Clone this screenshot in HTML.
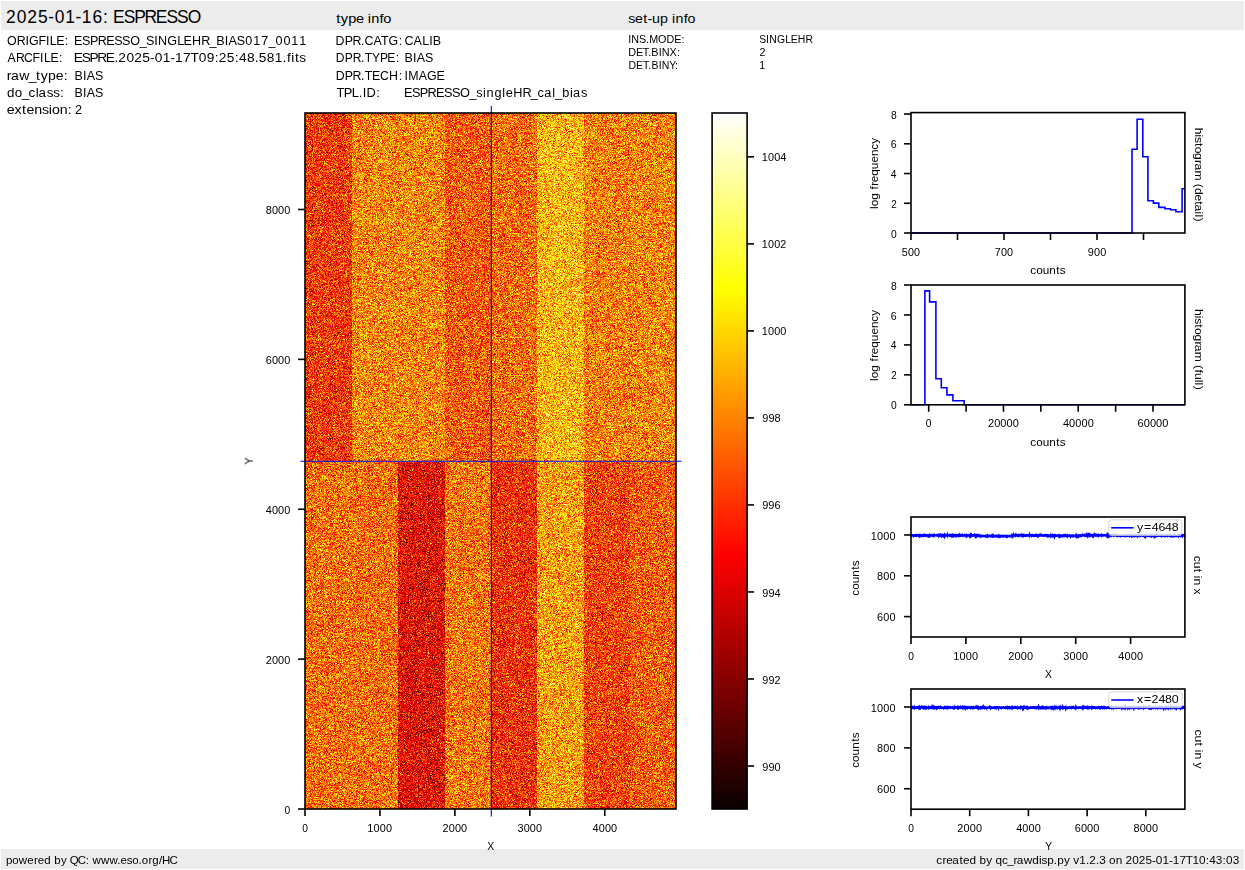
<!DOCTYPE html>
<html><head><meta charset="utf-8"><title>ESPRESSO raw display</title>
<style>
html,body{margin:0;padding:0;background:#fff;}
body{width:1245px;height:870px;position:relative;overflow:hidden;font-family:"Liberation Sans",sans-serif;}
#img{position:absolute;left:305.0px;top:113.0px;width:371px;height:696px;background:linear-gradient(to right,rgb(242,66,0) 0.00%, rgb(242,66,0) 12.50%,rgb(253,135,4) 12.50%, rgb(253,135,4) 25.00%,rgb(253,135,4) 25.00%, rgb(253,135,4) 37.50%,rgb(249,96,1) 37.50%, rgb(249,96,1) 50.00%,rgb(251,110,2) 50.00%, rgb(251,110,2) 62.50%,rgb(255,177,15) 62.50%, rgb(255,177,15) 75.00%,rgb(253,128,4) 75.00%, rgb(253,128,4) 87.50%,rgb(253,132,4) 87.50%, rgb(253,132,4) 100.00%) 0 0/100% 348.2px no-repeat, linear-gradient(to right,rgb(251,114,2) 0.00%, rgb(251,114,2) 12.50%,rgb(251,114,2) 12.50%, rgb(251,114,2) 25.00%,rgb(216,29,0) 25.00%, rgb(216,29,0) 37.50%,rgb(252,121,3) 37.50%, rgb(252,121,3) 50.00%,rgb(238,57,0) 50.00%, rgb(238,57,0) 62.50%,rgb(254,157,8) 62.50%, rgb(254,157,8) 75.00%,rgb(244,72,0) 75.00%, rgb(244,72,0) 87.50%,rgb(249,96,1) 87.50%, rgb(249,96,1) 100.00%) 0 348.2px/100% 347.8px no-repeat;}
svg{position:absolute;left:0;top:0;}
svg text{font-family:"Liberation Sans",sans-serif;}
</style></head><body>
<canvas id="img" width="371" height="696"></canvas>
<svg width="1245" height="870" viewBox="0 0 1245 870">
<rect x="1.00" y="1.00" width="1243.00" height="29.00" fill="#ececec" />
<rect x="1.00" y="849.00" width="1243.00" height="20.00" fill="#ececec" />
<text transform="translate(5.78,22.90) scale(0.9967,1)" x="0.23 11.09 21.51 32.31 42.67 49.05 59.60 69.99 76.28 87.01 97.59 102.84 107.54 118.28 128.82 139.18 150.43 161.17 171.79 182.63" font-size="17.50" fill="#000">2025-01-16: ESPRESSO</text>
<text transform="translate(335.86,23.00) scale(1.1116,1)" x="0.35 4.45 11.04 18.03 25.12 28.80 31.75 39.23 42.70" font-size="13.12" fill="#000">type info</text>
<text transform="translate(628.52,22.70) scale(1.0854,1)" x="-0.20 5.92 13.49 17.49 21.73 29.12 36.37 40.17 43.25 50.87 54.45" font-size="13.12" fill="#000">set-up info</text>
<text transform="translate(6.80,45.20) scale(0.9461,1)" x="0.10 10.48 19.70 23.48 33.49 41.44 45.53 52.34 61.33" font-size="13.12" fill="#000">ORIGFILE:</text>
<text transform="translate(74.37,45.20) scale(0.9604,1)" x="-0.30 8.05 16.26 24.33 33.08 41.42 49.68 58.14 68.00 74.70 83.23 87.10 96.64 107.05 113.75 122.42 132.06 140.73 147.68 156.63 160.45 169.10 178.03 186.24 194.56 202.01 209.38 217.66 225.87 234.15" font-size="13.12" fill="#000">ESPRESSO_SINGLEHR_BIAS017_0011</text>
<text transform="translate(7.40,62.10) scale(0.9288,1)" x="0.22 9.38 17.77 27.14 35.18 39.39 46.34 55.44" font-size="13.12" fill="#000">ARCFILE:</text>
<text transform="translate(74.37,62.10) scale(1.0494,1)" x="-0.67 6.99 14.49 21.85 29.88 38.14 41.84 49.58 57.00 64.69 72.14 76.61 84.12 91.60 95.99 103.62 110.72 118.50 126.04 133.71 137.51 145.20 152.88 156.84 164.42 171.93 175.74 183.36 190.87 198.45 202.59 206.57 210.15 214.25" font-size="13.12" fill="#000">ESPRE.2025-01-17T09:25:48.581.fits</text>
<text transform="translate(6.37,79.90) scale(1.0726,1)" x="0.41 4.25 11.95 20.75 27.72 32.02 38.87 46.11 53.47" font-size="13.12" fill="#000">raw_type:</text>
<text transform="translate(74.37,79.90) scale(0.9502,1)" x="0.12 9.14 13.02 21.77" font-size="13.12" fill="#000">BIAS</text>
<text transform="translate(6.81,97.10) scale(1.0228,1)" x="0.16 7.85 14.67 21.28 28.30 31.09 38.94 45.30 51.92" font-size="13.12" fill="#000">do_class:</text>
<text transform="translate(74.37,97.10) scale(0.9502,1)" x="0.12 9.14 13.02 21.77" font-size="13.12" fill="#000">BIAS</text>
<text transform="translate(6.81,113.80) scale(1.0848,1)" x="-0.08 6.99 14.11 18.14 25.34 32.42 38.77 41.70 48.90 56.29" font-size="13.12" fill="#000">extension:</text>
<text transform="translate(74.96,113.80) scale(0.9674,1)" font-size="13.12" fill="#000">2</text>
<text transform="translate(335.27,45.00) scale(0.9458,1)" x="0.38 10.01 18.22 27.12 30.85 40.42 48.32 56.37 67.01" font-size="13.12" fill="#000">DPR.CATG:</text>
<text transform="translate(404.80,45.00) scale(0.9548,1)" x="-0.24 9.24 18.38 25.50 29.35" font-size="13.12" fill="#000">CALIB</text>
<text transform="translate(335.27,62.40) scale(0.9193,1)" x="0.54 10.44 18.89 27.96 32.09 40.03 48.53 56.65 65.82" font-size="13.12" fill="#000">DPR.TYPE:</text>
<text transform="translate(404.27,62.40) scale(0.9502,1)" x="0.12 9.14 13.02 21.77" font-size="13.12" fill="#000">BIAS</text>
<text transform="translate(335.27,79.90) scale(0.9430,1)" x="0.40 10.06 18.29 27.21 31.19 39.02 47.44 57.11 67.25" font-size="13.12" fill="#000">DPR.TECH:</text>
<text transform="translate(404.27,79.90) scale(0.9467,1)" x="0.12 4.13 15.42 24.09 34.08" font-size="13.12" fill="#000">IMAGE</text>
<text transform="translate(336.54,97.20) scale(0.9818,1)" x="-0.12 7.45 15.62 22.74 26.65 30.54 40.48" font-size="13.12" fill="#000">TPL.ID:</text>
<text transform="translate(404.27,97.20) scale(0.9710,1)" x="-0.35 7.91 16.03 24.01 32.67 40.92 49.10 57.46 67.22 74.22 81.10 84.80 92.86 101.00 104.59 112.27 121.80 130.39 137.34 144.13 152.53 155.37 162.73 170.72 173.78 182.01" font-size="13.12" fill="#000">ESPRESSO_singleHR_cal_bias</text>
<text transform="translate(628.17,43.00) scale(0.9770,1)" x="0.05 3.21 11.00 18.20 21.49 30.66 39.36 47.14 54.53" font-size="11.03" fill="#000">INS.MODE:</text>
<text transform="translate(759.31,43.00) scale(0.9473,1)" x="-0.10 7.14 10.47 18.59 27.45 33.16 40.55 48.76" font-size="11.03" fill="#000">SINGLEHR</text>
<text transform="translate(628.17,55.90) scale(0.9819,1)" x="0.16 7.90 14.89 20.42 23.63 31.03 34.16 42.11 49.74" font-size="11.03" fill="#000">DET.BINX:</text>
<text transform="translate(759.46,55.90) scale(0.9674,1)" font-size="11.03" fill="#000">2</text>
<text transform="translate(628.17,68.60) scale(0.9505,1)" x="0.30 8.29 15.49 21.14 24.54 32.11 35.42 43.23 49.15" font-size="11.03" fill="#000">DET.BINY:</text>
<text transform="translate(759.19,68.60) scale(0.9589,1)" font-size="11.03" fill="#000">1</text>
<text transform="translate(5.75,863.80) scale(1.0476,1)" x="0.17 6.32 12.51 20.57 27.06 30.56 36.70 42.95 46.29 52.63 58.32 61.14 68.77 76.41 79.60 82.88 91.01 99.15 106.32 109.46 115.47 120.73 126.69 129.80 136.29 139.86 146.27 149.25 156.41" font-size="10.94" fill="#000">powered by QC: www.eso.org/HC</text>
<text transform="translate(936.44,863.75) scale(1.0785,1)" x="-0.20 5.64 9.02 14.55 21.28 24.67 30.64 36.80 39.94 46.12 51.72 54.76 60.72 65.63 71.40 74.57 80.95 88.83 95.12 97.53 102.79 108.85 111.99 118.17 123.77 126.96 132.52 138.71 141.67 147.93 151.03 157.14 160.12 166.16 172.24 175.21 181.49 187.51 193.75 199.82 203.42 209.50 215.60 219.13 225.32 231.07 237.33 243.54 249.77 252.94 259.10 265.32 268.49 274.65" font-size="10.94" fill="#000">created by qc_rawdisp.py v1.2.3 on 2025-01-17T10:43:03</text>
<line x1="491.30" y1="106.00" x2="491.30" y2="816.50" stroke="#0000ff" stroke-width="1.1" stroke-linecap="butt"/>
<line x1="300.50" y1="461.20" x2="681.50" y2="461.20" stroke="#0000ff" stroke-width="1.1" stroke-linecap="butt"/>
<rect x="305.00" y="113.00" width="371.00" height="696.00" fill="none" stroke="#000" stroke-width="1.6" />
<line x1="305.00" y1="809.00" x2="305.00" y2="815.94" stroke="#000" stroke-width="1.6" stroke-linecap="butt"/>
<text transform="translate(302.15,831.69) scale(1.0041,1)" font-size="10.21" fill="#000">0</text>
<line x1="379.94" y1="809.00" x2="379.94" y2="815.94" stroke="#000" stroke-width="1.6" stroke-linecap="butt"/>
<text transform="translate(367.36,831.69) scale(1.0695,1)" x="-0.01 5.83 11.62 17.40" font-size="10.21" fill="#000">1000</text>
<line x1="454.88" y1="809.00" x2="454.88" y2="815.94" stroke="#000" stroke-width="1.6" stroke-linecap="butt"/>
<text transform="translate(442.48,831.69) scale(1.0728,1)" x="-0.08 5.81 11.57 17.34" font-size="10.21" fill="#000">2000</text>
<line x1="529.82" y1="809.00" x2="529.82" y2="815.94" stroke="#000" stroke-width="1.6" stroke-linecap="butt"/>
<text transform="translate(517.40,831.69) scale(1.0654,1)" x="0.08 5.87 11.67 17.48" font-size="10.21" fill="#000">3000</text>
<line x1="604.76" y1="809.00" x2="604.76" y2="815.94" stroke="#000" stroke-width="1.6" stroke-linecap="butt"/>
<text transform="translate(592.48,831.69) scale(1.0700,1)" x="0.05 5.83 11.61 17.39" font-size="10.21" fill="#000">4000</text>
<line x1="298.06" y1="809.00" x2="305.00" y2="809.00" stroke="#000" stroke-width="1.6" stroke-linecap="butt"/>
<text transform="translate(284.50,813.55) scale(1.0041,1)" font-size="10.21" fill="#000">0</text>
<line x1="298.06" y1="659.12" x2="305.00" y2="659.12" stroke="#000" stroke-width="1.6" stroke-linecap="butt"/>
<text transform="translate(265.71,663.67) scale(1.0728,1)" x="-0.08 5.81 11.57 17.34" font-size="10.21" fill="#000">2000</text>
<line x1="298.06" y1="509.24" x2="305.00" y2="509.24" stroke="#000" stroke-width="1.6" stroke-linecap="butt"/>
<text transform="translate(265.71,513.79) scale(1.0700,1)" x="0.05 5.83 11.61 17.39" font-size="10.21" fill="#000">4000</text>
<line x1="298.06" y1="359.36" x2="305.00" y2="359.36" stroke="#000" stroke-width="1.6" stroke-linecap="butt"/>
<text transform="translate(265.71,363.91) scale(1.0746,1)" x="0.04 5.79 11.55 17.30" font-size="10.21" fill="#000">6000</text>
<line x1="298.06" y1="209.48" x2="305.00" y2="209.48" stroke="#000" stroke-width="1.6" stroke-linecap="butt"/>
<text transform="translate(265.71,214.03) scale(1.0718,1)" x="0.04 5.81 11.58 17.35" font-size="10.21" fill="#000">8000</text>
<text transform="translate(487.21,849.80) scale(0.9531,1)" font-size="10.94" fill="#000">X</text>
<text transform="translate(249.00,461.00) rotate(-90) translate(-3.43,3.76) scale(0.9400,1)" font-size="10.94" fill="#000">Y</text>
<defs><linearGradient id="hot" x1="0" y1="1" x2="0" y2="0"><stop offset="0" stop-color="rgb(10,0,0)"/><stop offset="0.365079" stop-color="rgb(255,0,0)"/><stop offset="0.746032" stop-color="rgb(255,255,0)"/><stop offset="1" stop-color="rgb(255,255,255)"/></linearGradient></defs>
<rect x="712.10" y="113.00" width="35.00" height="696.00" fill="url(#hot)" />
<rect x="712.10" y="113.00" width="35.00" height="696.00" fill="none" stroke="#000" stroke-width="1.6" />
<line x1="747.10" y1="766.00" x2="754.04" y2="766.00" stroke="#000" stroke-width="1.6" stroke-linecap="butt"/>
<text transform="translate(762.19,770.55) scale(1.0709,1)" x="0.02 5.79 11.60" font-size="10.21" fill="#000">990</text>
<line x1="747.10" y1="678.98" x2="754.04" y2="678.98" stroke="#000" stroke-width="1.6" stroke-linecap="butt"/>
<text transform="translate(762.19,683.53) scale(1.0580,1)" x="0.05 5.90 11.65" font-size="10.21" fill="#000">992</text>
<line x1="747.10" y1="591.96" x2="754.04" y2="591.96" stroke="#000" stroke-width="1.6" stroke-linecap="butt"/>
<text transform="translate(762.19,596.51) scale(1.0704,1)" x="0.02 5.80 11.60" font-size="10.21" fill="#000">994</text>
<line x1="747.10" y1="504.94" x2="754.04" y2="504.94" stroke="#000" stroke-width="1.6" stroke-linecap="butt"/>
<text transform="translate(762.19,509.49) scale(1.0762,1)" x="0.00 5.75 11.52" font-size="10.21" fill="#000">996</text>
<line x1="747.10" y1="417.92" x2="754.04" y2="417.92" stroke="#000" stroke-width="1.6" stroke-linecap="butt"/>
<text transform="translate(762.19,422.47) scale(1.0726,1)" x="0.01 5.78 11.57" font-size="10.21" fill="#000">998</text>
<line x1="747.10" y1="330.90" x2="754.04" y2="330.90" stroke="#000" stroke-width="1.6" stroke-linecap="butt"/>
<text transform="translate(761.73,335.45) scale(1.0695,1)" x="-0.01 5.83 11.62 17.40" font-size="10.21" fill="#000">1000</text>
<line x1="747.10" y1="243.88" x2="754.04" y2="243.88" stroke="#000" stroke-width="1.6" stroke-linecap="butt"/>
<text transform="translate(761.73,248.43) scale(1.0599,1)" x="0.02 5.91 11.75 17.46" font-size="10.21" fill="#000">1002</text>
<line x1="747.10" y1="156.86" x2="754.04" y2="156.86" stroke="#000" stroke-width="1.6" stroke-linecap="butt"/>
<text transform="translate(761.73,161.41) scale(1.0692,1)" x="-0.01 5.84 11.62 17.41" font-size="10.21" fill="#000">1004</text>
<path d="M911.0,233.0 L1132.0,233.0 L1132.0,149.2 L1137.1,149.2 L1137.1,119.3 L1142.8,119.3 L1142.8,156.7 L1147.9,156.7 L1147.9,200.8 L1153.4,200.8 L1153.4,203.1 L1158.8,203.1 L1158.8,207.4 L1165.0,207.4 L1165.0,208.7 L1170.4,208.7 L1170.4,209.8 L1175.9,209.8 L1175.9,211.8 L1182.1,211.8 L1182.1,188.8 L1184.9,188.8" fill="none" stroke="#0000ff" stroke-width="1.6" stroke-linejoin="miter" />
<rect x="911.00" y="112.60" width="273.90" height="120.40" fill="none" stroke="#000" stroke-width="1.6" />
<line x1="904.06" y1="233.00" x2="911.00" y2="233.00" stroke="#000" stroke-width="1.6" stroke-linecap="butt"/>
<text transform="translate(890.90,237.55) scale(1.0041,1)" font-size="10.21" fill="#000">0</text>
<line x1="904.06" y1="203.26" x2="911.00" y2="203.26" stroke="#000" stroke-width="1.6" stroke-linecap="butt"/>
<text transform="translate(891.20,207.81) scale(0.9674,1)" font-size="10.21" fill="#000">2</text>
<line x1="904.06" y1="173.52" x2="911.00" y2="173.52" stroke="#000" stroke-width="1.6" stroke-linecap="butt"/>
<text transform="translate(890.80,178.07) scale(1.0041,1)" font-size="10.21" fill="#000">4</text>
<line x1="904.06" y1="143.78" x2="911.00" y2="143.78" stroke="#000" stroke-width="1.6" stroke-linecap="butt"/>
<text transform="translate(890.77,148.33) scale(1.0391,1)" font-size="10.21" fill="#000">6</text>
<line x1="904.06" y1="114.04" x2="911.00" y2="114.04" stroke="#000" stroke-width="1.6" stroke-linecap="butt"/>
<text transform="translate(890.89,118.59) scale(1.0149,1)" font-size="10.21" fill="#000">8</text>
<line x1="911.00" y1="233.00" x2="911.00" y2="239.94" stroke="#000" stroke-width="1.6" stroke-linecap="butt"/>
<text transform="translate(901.67,255.69) scale(1.0577,1)" x="0.05 5.93 11.78" font-size="10.21" fill="#000">500</text>
<line x1="957.50" y1="233.00" x2="957.50" y2="239.94" stroke="#000" stroke-width="1.6" stroke-linecap="butt"/>
<line x1="1004.00" y1="233.00" x2="1004.00" y2="239.94" stroke="#000" stroke-width="1.6" stroke-linecap="butt"/>
<text transform="translate(994.65,255.69) scale(1.0623,1)" x="0.05 5.89 11.71" font-size="10.21" fill="#000">700</text>
<line x1="1050.50" y1="233.00" x2="1050.50" y2="239.94" stroke="#000" stroke-width="1.6" stroke-linecap="butt"/>
<line x1="1097.00" y1="233.00" x2="1097.00" y2="239.94" stroke="#000" stroke-width="1.6" stroke-linecap="butt"/>
<text transform="translate(1087.74,255.69) scale(1.0709,1)" x="0.02 5.82 11.60" font-size="10.21" fill="#000">900</text>
<line x1="1143.50" y1="233.00" x2="1143.50" y2="239.94" stroke="#000" stroke-width="1.6" stroke-linecap="butt"/>
<text transform="translate(1030.55,273.80) scale(1.0755,1)" x="-0.19 5.25 11.26 17.44 23.89 27.20" font-size="10.94" fill="#000">counts</text>
<text transform="translate(875.00,173.00) rotate(-90) translate(-36.06,2.83) scale(1.0806,1)" x="0.12 2.59 8.55 14.70 18.06 21.49 24.85 30.81 36.96 43.02 49.04 54.91 60.54" font-size="10.94" fill="#000">log frequency</text>
<text transform="translate(1198.00,174.60) rotate(90) translate(-46.80,2.83) scale(1.1038,1)" x="-0.05 6.08 8.40 13.83 17.07 22.91 29.27 32.35 38.72 47.85 50.59 54.44 60.41 66.64 69.51 75.92 78.54 81.37" font-size="10.94" fill="#000">histogram (detail)</text>
<path d="M911.0,404.8 L924.9,404.8 L924.9,290.9 L929.6,290.9 L929.6,301.9 L935.9,301.9 L935.9,378.8 L941.3,378.8 L941.3,387.8 L946.9,387.8 L946.9,394.9 L952.9,394.9 L952.9,400.8 L964.1,400.8 L964.1,404.8 L1184.9,404.8" fill="none" stroke="#0000ff" stroke-width="1.6" stroke-linejoin="miter" />
<rect x="911.00" y="285.00" width="273.90" height="119.80" fill="none" stroke="#000" stroke-width="1.6" />
<line x1="904.06" y1="404.80" x2="911.00" y2="404.80" stroke="#000" stroke-width="1.6" stroke-linecap="butt"/>
<text transform="translate(890.90,409.35) scale(1.0041,1)" font-size="10.21" fill="#000">0</text>
<line x1="904.06" y1="374.85" x2="911.00" y2="374.85" stroke="#000" stroke-width="1.6" stroke-linecap="butt"/>
<text transform="translate(891.20,379.40) scale(0.9674,1)" font-size="10.21" fill="#000">2</text>
<line x1="904.06" y1="344.90" x2="911.00" y2="344.90" stroke="#000" stroke-width="1.6" stroke-linecap="butt"/>
<text transform="translate(890.80,349.45) scale(1.0041,1)" font-size="10.21" fill="#000">4</text>
<line x1="904.06" y1="314.95" x2="911.00" y2="314.95" stroke="#000" stroke-width="1.6" stroke-linecap="butt"/>
<text transform="translate(890.77,319.50) scale(1.0391,1)" font-size="10.21" fill="#000">6</text>
<line x1="904.06" y1="285.00" x2="911.00" y2="285.00" stroke="#000" stroke-width="1.6" stroke-linecap="butt"/>
<text transform="translate(890.89,289.55) scale(1.0149,1)" font-size="10.21" fill="#000">8</text>
<line x1="928.70" y1="404.80" x2="928.70" y2="411.74" stroke="#000" stroke-width="1.6" stroke-linecap="butt"/>
<text transform="translate(925.85,427.49) scale(1.0041,1)" font-size="10.21" fill="#000">0</text>
<line x1="966.08" y1="404.80" x2="966.08" y2="411.74" stroke="#000" stroke-width="1.6" stroke-linecap="butt"/>
<line x1="1003.47" y1="404.80" x2="1003.47" y2="411.74" stroke="#000" stroke-width="1.6" stroke-linecap="butt"/>
<text transform="translate(987.97,427.49) scale(1.0763,1)" x="-0.09 5.78 11.52 17.27 23.02" font-size="10.21" fill="#000">20000</text>
<line x1="1040.85" y1="404.80" x2="1040.85" y2="411.74" stroke="#000" stroke-width="1.6" stroke-linecap="butt"/>
<line x1="1078.23" y1="404.80" x2="1078.23" y2="411.74" stroke="#000" stroke-width="1.6" stroke-linecap="butt"/>
<text transform="translate(1062.86,427.49) scale(1.0740,1)" x="0.04 5.80 11.56 17.31 23.07" font-size="10.21" fill="#000">40000</text>
<line x1="1115.62" y1="404.80" x2="1115.62" y2="411.74" stroke="#000" stroke-width="1.6" stroke-linecap="butt"/>
<line x1="1153.00" y1="404.80" x2="1153.00" y2="411.74" stroke="#000" stroke-width="1.6" stroke-linecap="butt"/>
<text transform="translate(1137.52,427.49) scale(1.0777,1)" x="0.03 5.77 11.51 17.24 22.98" font-size="10.21" fill="#000">60000</text>
<text transform="translate(1030.55,445.60) scale(1.0755,1)" x="-0.19 5.25 11.26 17.44 23.89 27.20" font-size="10.94" fill="#000">counts</text>
<text transform="translate(875.00,345.00) rotate(-90) translate(-36.06,2.83) scale(1.0806,1)" x="0.12 2.59 8.55 14.70 18.06 21.49 24.85 30.81 36.96 43.02 49.04 54.91 60.54" font-size="10.94" fill="#000">log frequency</text>
<text transform="translate(1198.00,349.30) rotate(90) translate(-40.19,2.83) scale(1.1068,1)" x="-0.06 6.06 8.37 13.78 17.02 22.84 29.18 32.25 38.61 47.73 50.45 54.64 57.63 63.76 66.38 69.20" font-size="10.94" fill="#000">histogram (full)</text>
<path d="M911.00,535.51 L911.20,535.39 L911.39,535.51 L911.59,535.52 L911.78,535.62 L911.98,535.50 L912.17,535.29 L912.37,535.40 L912.57,535.30 L912.76,535.43 L912.96,535.40 L913.15,535.44 L913.35,535.74 L913.54,535.33 L913.74,535.39 L913.93,535.39 L914.13,535.75 L914.33,535.75 L914.52,535.61 L914.72,535.55 L914.91,535.42 L915.11,535.48 L915.30,535.38 L915.50,535.57 L915.70,535.42 L915.89,535.41 L916.09,535.58 L916.28,535.19 L916.48,535.38 L916.67,535.27 L916.87,535.57 L917.06,535.59 L917.26,535.53 L917.46,535.49 L917.65,535.37 L917.85,535.43 L918.04,535.54 L918.24,535.63 L918.43,535.55 L918.63,535.27 L918.83,535.60 L919.02,535.43 L919.22,535.40 L919.41,535.71 L919.61,535.46 L919.80,535.26 L920.00,535.80 L920.20,535.52 L920.39,535.49 L920.59,535.60 L920.78,535.39 L920.98,535.48 L921.17,535.71 L921.37,535.33 L921.56,535.36 L921.76,535.31 L921.96,535.23 L922.15,535.41 L922.35,535.45 L922.54,535.68 L922.74,535.37 L922.93,535.57 L923.13,535.54 L923.33,535.68 L923.52,535.63 L923.72,535.56 L923.91,535.26 L924.11,535.80 L924.30,535.71 L924.50,535.43 L924.70,535.23 L924.89,535.37 L925.09,535.78 L925.28,535.88 L925.48,535.41 L925.67,535.59 L925.87,535.65 L926.06,535.31 L926.26,535.29 L926.46,535.44 L926.65,535.43 L926.85,535.40 L927.04,535.21 L927.24,535.37 L927.43,535.38 L927.63,535.38 L927.83,535.73 L928.02,535.26 L928.22,535.31 L928.41,535.38 L928.61,535.79 L928.80,535.57 L929.00,535.33 L929.19,535.77 L929.39,535.50 L929.59,535.30 L929.78,535.68 L929.98,535.21 L930.17,535.38 L930.37,535.49 L930.56,535.42 L930.76,535.36 L930.96,535.45 L931.15,535.28 L931.35,535.58 L931.54,535.54 L931.74,535.30 L931.93,535.47 L932.13,535.61 L932.33,535.31 L932.52,535.23 L932.72,535.54 L932.91,535.69 L933.11,535.49 L933.30,535.49 L933.50,535.52 L933.69,535.24 L933.89,535.64 L934.09,535.26 L934.28,535.68 L934.48,535.60 L934.67,535.37 L934.87,535.29 L935.06,535.33 L935.26,535.41 L935.46,535.45 L935.65,535.44 L935.85,535.38 L936.04,535.50 L936.24,535.42 L936.43,535.38 L936.63,535.47 L936.82,535.34 L937.02,535.38 L937.22,535.14 L937.41,535.42 L937.61,535.54 L937.80,535.53 L938.00,535.47 L938.19,535.32 L938.39,535.52 L938.59,535.41 L938.78,535.17 L938.98,535.89 L939.17,535.65 L939.37,535.43 L939.56,535.40 L939.76,535.43 L939.96,535.54 L940.15,535.36 L940.35,535.42 L940.54,535.55 L940.74,535.07 L940.93,535.41 L941.13,535.56 L941.32,535.49 L941.52,535.51 L941.72,535.48 L941.91,535.91 L942.11,535.55 L942.30,535.30 L942.50,535.66 L942.69,535.48 L942.89,535.31 L943.09,535.33 L943.28,535.23 L943.48,535.75 L943.67,535.53 L943.87,535.53 L944.06,535.37 L944.26,535.29 L944.45,535.91 L944.65,535.29 L944.85,535.71 L945.04,535.36 L945.24,535.71 L945.43,535.44 L945.63,535.27 L945.82,535.49 L946.02,535.44 L946.22,535.34 L946.41,535.45 L946.61,535.48 L946.80,535.22 L947.00,535.30 L947.19,535.52 L947.39,535.02 L947.59,535.66 L947.78,535.32 L947.98,535.51 L948.17,535.45 L948.37,535.35 L948.56,535.43 L948.76,535.37 L948.95,535.72 L949.15,535.72 L949.35,535.37 L949.54,535.63 L949.74,535.64 L949.93,535.71 L950.13,535.26 L950.32,535.35 L950.52,535.23 L950.72,535.62 L950.91,535.47 L951.11,535.66 L951.30,535.34 L951.50,535.21 L951.69,535.61 L951.89,535.21 L952.09,535.31 L952.28,535.50 L952.48,535.79 L952.67,535.24 L952.87,535.49 L953.06,535.57 L953.26,535.40 L953.45,535.40 L953.65,535.22 L953.85,535.64 L954.04,535.28 L954.24,535.23 L954.43,535.23 L954.63,535.50 L954.82,535.59 L955.02,535.30 L955.22,535.45 L955.41,535.45 L955.61,535.24 L955.80,535.51 L956.00,535.84 L956.19,535.53 L956.39,535.77 L956.58,535.34 L956.78,535.42 L956.98,535.57 L957.17,535.47 L957.37,535.33 L957.56,535.46 L957.76,535.25 L957.95,535.48 L958.15,535.30 L958.35,535.23 L958.54,535.21 L958.74,535.58 L958.93,535.33 L959.13,535.78 L959.32,535.65 L959.52,535.79 L959.72,535.29 L959.91,535.67 L960.11,535.47 L960.30,535.50 L960.50,535.47 L960.69,535.57 L960.89,535.43 L961.08,535.18 L961.28,535.46 L961.48,535.38 L961.67,535.31 L961.87,535.50 L962.06,535.68 L962.26,535.56 L962.45,535.29 L962.65,535.74 L962.85,535.57 L963.04,535.30 L963.24,535.34 L963.43,535.47 L963.63,535.34 L963.82,535.44 L964.02,535.66 L964.21,535.72 L964.41,535.57 L964.61,535.32 L964.80,535.56 L965.00,535.62 L965.19,535.60 L965.39,535.72 L965.58,535.49 L965.78,535.66 L965.98,535.41 L966.17,535.85 L966.37,535.42 L966.56,535.57 L966.76,535.79 L966.95,535.35 L967.15,535.51 L967.35,535.83 L967.54,535.61 L967.74,535.42 L967.93,535.54 L968.13,535.34 L968.32,535.35 L968.52,535.36 L968.71,535.42 L968.91,535.25 L969.11,535.36 L969.30,535.40 L969.50,535.81 L969.69,535.32 L969.89,535.26 L970.08,535.52 L970.28,535.55 L970.48,535.15 L970.67,535.76 L970.87,535.39 L971.06,535.07 L971.26,535.62 L971.45,535.36 L971.65,535.16 L971.84,535.49 L972.04,535.38 L972.24,535.32 L972.43,535.62 L972.63,535.48 L972.82,535.42 L973.02,535.33 L973.21,535.48 L973.41,535.50 L973.61,535.64 L973.80,535.53 L974.00,535.32 L974.19,535.45 L974.39,535.61 L974.58,535.61 L974.78,535.03 L974.98,535.28 L975.17,535.37 L975.37,535.89 L975.56,535.37 L975.76,535.39 L975.95,535.19 L976.15,535.40 L976.34,535.48 L976.54,535.38 L976.74,535.79 L976.93,535.30 L977.13,535.42 L977.32,535.58 L977.52,535.25 L977.71,535.17 L977.91,535.70 L978.11,535.58 L978.30,535.42 L978.50,535.44 L978.69,535.53 L978.89,535.63 L979.08,535.12 L979.28,535.30 L979.48,536.26 L979.67,536.28 L979.87,535.78 L980.06,535.90 L980.26,535.76 L980.45,535.93 L980.65,536.20 L980.84,536.02 L981.04,536.41 L981.24,536.18 L981.43,536.07 L981.63,535.98 L981.82,536.18 L982.02,536.08 L982.21,535.99 L982.41,536.00 L982.61,535.96 L982.80,536.03 L983.00,536.11 L983.19,535.93 L983.39,536.05 L983.58,536.20 L983.78,536.16 L983.97,536.06 L984.17,536.08 L984.37,536.04 L984.56,536.06 L984.76,536.03 L984.95,536.08 L985.15,536.27 L985.34,535.99 L985.54,535.89 L985.74,535.99 L985.93,536.09 L986.13,535.99 L986.32,536.22 L986.52,536.37 L986.71,536.05 L986.91,536.21 L987.11,535.94 L987.30,536.24 L987.50,536.49 L987.69,536.23 L987.89,535.80 L988.08,536.12 L988.28,536.28 L988.47,536.19 L988.67,535.98 L988.87,535.98 L989.06,536.03 L989.26,535.82 L989.45,535.95 L989.65,536.06 L989.84,535.96 L990.04,535.79 L990.24,535.90 L990.43,535.89 L990.63,536.24 L990.82,536.09 L991.02,535.94 L991.21,536.11 L991.41,535.89 L991.60,535.96 L991.80,535.91 L992.00,536.10 L992.19,535.65 L992.39,535.86 L992.58,536.10 L992.78,536.05 L992.97,535.64 L993.17,536.12 L993.37,535.92 L993.56,535.90 L993.76,536.06 L993.95,536.25 L994.15,536.03 L994.34,536.00 L994.54,535.88 L994.74,535.93 L994.93,536.06 L995.13,535.92 L995.32,535.97 L995.52,536.03 L995.71,536.05 L995.91,536.10 L996.10,535.95 L996.30,536.23 L996.50,536.16 L996.69,536.06 L996.89,536.30 L997.08,536.13 L997.28,536.39 L997.47,536.17 L997.67,535.97 L997.87,535.97 L998.06,536.07 L998.26,536.10 L998.45,536.29 L998.65,535.76 L998.84,535.98 L999.04,535.88 L999.23,536.21 L999.43,536.09 L999.63,536.36 L999.82,535.93 L1000.02,535.91 L1000.21,536.37 L1000.41,536.07 L1000.60,535.96 L1000.80,536.35 L1001.00,536.36 L1001.19,536.24 L1001.39,536.16 L1001.58,536.29 L1001.78,536.06 L1001.97,536.02 L1002.17,535.96 L1002.37,535.95 L1002.56,535.82 L1002.76,535.87 L1002.95,536.28 L1003.15,536.14 L1003.34,536.23 L1003.54,536.24 L1003.73,536.07 L1003.93,536.06 L1004.13,535.98 L1004.32,536.32 L1004.52,536.26 L1004.71,536.06 L1004.91,536.09 L1005.10,536.11 L1005.30,536.07 L1005.50,536.19 L1005.69,535.95 L1005.89,536.00 L1006.08,536.08 L1006.28,536.17 L1006.47,536.09 L1006.67,536.51 L1006.87,536.22 L1007.06,536.06 L1007.26,536.31 L1007.45,536.03 L1007.65,536.04 L1007.84,536.29 L1008.04,536.10 L1008.23,536.11 L1008.43,535.99 L1008.63,535.96 L1008.82,536.07 L1009.02,536.20 L1009.21,536.08 L1009.41,536.07 L1009.60,535.94 L1009.80,536.01 L1010.00,536.18 L1010.19,536.28 L1010.39,536.12 L1010.58,536.18 L1010.78,536.24 L1010.97,536.08 L1011.17,536.14 L1011.36,536.04 L1011.56,535.98 L1011.76,536.13 L1011.95,535.68 L1012.15,536.11 L1012.34,535.88 L1012.54,536.04 L1012.73,535.88 L1012.93,536.45 L1013.13,536.18 L1013.32,536.02 L1013.52,535.96 L1013.71,535.05 L1013.91,535.38 L1014.10,535.22 L1014.30,535.30 L1014.50,535.27 L1014.69,535.35 L1014.89,535.45 L1015.08,535.35 L1015.28,535.60 L1015.47,535.24 L1015.67,535.59 L1015.86,535.39 L1016.06,535.08 L1016.26,535.47 L1016.45,535.43 L1016.65,535.24 L1016.84,535.42 L1017.04,535.56 L1017.23,535.39 L1017.43,535.33 L1017.63,535.31 L1017.82,535.55 L1018.02,535.14 L1018.21,535.16 L1018.41,535.43 L1018.60,535.38 L1018.80,535.50 L1018.99,535.20 L1019.19,535.54 L1019.39,535.32 L1019.58,535.51 L1019.78,535.54 L1019.97,535.31 L1020.17,535.21 L1020.36,535.43 L1020.56,535.54 L1020.76,535.30 L1020.95,535.44 L1021.15,535.38 L1021.34,535.18 L1021.54,535.24 L1021.73,535.51 L1021.93,535.06 L1022.13,535.43 L1022.32,535.30 L1022.52,535.53 L1022.71,535.44 L1022.91,535.71 L1023.10,535.14 L1023.30,535.21 L1023.49,535.63 L1023.69,535.67 L1023.89,535.69 L1024.08,535.24 L1024.28,535.50 L1024.47,535.44 L1024.67,535.48 L1024.86,535.45 L1025.06,535.61 L1025.26,535.42 L1025.45,535.66 L1025.65,535.44 L1025.84,535.38 L1026.04,535.35 L1026.23,535.47 L1026.43,535.58 L1026.62,535.40 L1026.82,535.51 L1027.02,535.17 L1027.21,535.30 L1027.41,535.45 L1027.60,535.51 L1027.80,535.54 L1027.99,535.58 L1028.19,535.49 L1028.39,535.38 L1028.58,535.34 L1028.78,535.34 L1028.97,535.09 L1029.17,535.54 L1029.36,535.43 L1029.56,534.97 L1029.76,535.73 L1029.95,535.51 L1030.15,535.40 L1030.34,535.40 L1030.54,535.36 L1030.73,535.47 L1030.93,535.37 L1031.12,535.42 L1031.32,535.30 L1031.52,535.74 L1031.71,535.57 L1031.91,535.43 L1032.10,535.60 L1032.30,535.60 L1032.49,535.33 L1032.69,535.53 L1032.89,535.32 L1033.08,535.31 L1033.28,535.38 L1033.47,535.35 L1033.67,535.45 L1033.86,535.66 L1034.06,535.43 L1034.26,535.35 L1034.45,535.52 L1034.65,535.44 L1034.84,535.31 L1035.04,535.57 L1035.23,535.32 L1035.43,535.12 L1035.62,535.52 L1035.82,535.40 L1036.02,535.45 L1036.21,535.18 L1036.41,535.38 L1036.60,535.28 L1036.80,535.54 L1036.99,535.43 L1037.19,535.43 L1037.39,535.72 L1037.58,535.19 L1037.78,535.28 L1037.97,535.71 L1038.17,535.31 L1038.36,535.45 L1038.56,535.36 L1038.75,535.37 L1038.95,535.67 L1039.15,535.46 L1039.34,535.18 L1039.54,535.52 L1039.73,535.60 L1039.93,535.65 L1040.12,535.63 L1040.32,535.37 L1040.52,535.15 L1040.71,535.36 L1040.91,535.39 L1041.10,535.06 L1041.30,535.51 L1041.49,535.54 L1041.69,535.34 L1041.89,535.34 L1042.08,535.59 L1042.28,535.62 L1042.47,535.38 L1042.67,535.39 L1042.86,535.64 L1043.06,535.46 L1043.25,535.52 L1043.45,535.35 L1043.65,535.45 L1043.84,535.44 L1044.04,535.49 L1044.23,535.26 L1044.43,535.20 L1044.62,535.49 L1044.82,535.29 L1045.02,535.55 L1045.21,535.42 L1045.41,535.31 L1045.60,535.18 L1045.80,535.49 L1045.99,535.44 L1046.19,535.40 L1046.38,535.67 L1046.58,535.43 L1046.78,535.54 L1046.97,535.37 L1047.17,535.61 L1047.36,535.75 L1047.56,535.42 L1047.75,535.39 L1047.95,535.91 L1048.15,535.67 L1048.34,535.86 L1048.54,535.92 L1048.73,535.74 L1048.93,536.07 L1049.12,535.93 L1049.32,535.82 L1049.52,535.68 L1049.71,535.84 L1049.91,535.77 L1050.10,535.92 L1050.30,535.77 L1050.49,535.54 L1050.69,535.93 L1050.88,535.43 L1051.08,535.92 L1051.28,535.81 L1051.47,535.79 L1051.67,535.65 L1051.86,536.02 L1052.06,536.16 L1052.25,535.72 L1052.45,535.69 L1052.65,535.71 L1052.84,535.39 L1053.04,535.78 L1053.23,535.77 L1053.43,535.66 L1053.62,535.76 L1053.82,535.54 L1054.01,536.02 L1054.21,535.88 L1054.41,536.38 L1054.60,535.68 L1054.80,535.88 L1054.99,535.67 L1055.19,535.46 L1055.38,535.82 L1055.58,535.86 L1055.78,535.90 L1055.97,535.95 L1056.17,535.92 L1056.36,535.71 L1056.56,535.81 L1056.75,535.81 L1056.95,535.84 L1057.15,535.67 L1057.34,535.74 L1057.54,535.84 L1057.73,535.71 L1057.93,535.84 L1058.12,536.00 L1058.32,535.58 L1058.51,535.74 L1058.71,535.97 L1058.91,535.64 L1059.10,535.76 L1059.30,536.07 L1059.49,535.55 L1059.69,535.76 L1059.88,535.67 L1060.08,535.78 L1060.28,535.84 L1060.47,536.07 L1060.67,535.66 L1060.86,535.81 L1061.06,535.86 L1061.25,535.76 L1061.45,535.80 L1061.64,535.71 L1061.84,535.88 L1062.04,535.82 L1062.23,536.17 L1062.43,535.89 L1062.62,535.71 L1062.82,535.60 L1063.01,535.88 L1063.21,535.84 L1063.41,535.56 L1063.60,535.87 L1063.80,535.70 L1063.99,535.54 L1064.19,535.81 L1064.38,535.62 L1064.58,535.93 L1064.78,535.78 L1064.97,535.83 L1065.17,535.80 L1065.36,535.63 L1065.56,535.43 L1065.75,535.92 L1065.95,535.91 L1066.14,535.74 L1066.34,535.99 L1066.54,535.74 L1066.73,535.72 L1066.93,535.86 L1067.12,535.73 L1067.32,536.07 L1067.51,535.69 L1067.71,536.07 L1067.91,535.93 L1068.10,535.91 L1068.30,535.88 L1068.49,535.68 L1068.69,535.80 L1068.88,535.88 L1069.08,535.73 L1069.28,535.56 L1069.47,535.82 L1069.67,535.76 L1069.86,535.61 L1070.06,535.77 L1070.25,536.03 L1070.45,535.41 L1070.64,535.46 L1070.84,536.14 L1071.04,535.82 L1071.23,535.75 L1071.43,535.66 L1071.62,535.71 L1071.82,535.86 L1072.01,535.99 L1072.21,535.80 L1072.41,535.65 L1072.60,535.99 L1072.80,535.98 L1072.99,535.82 L1073.19,536.13 L1073.38,535.86 L1073.58,535.89 L1073.77,535.74 L1073.97,535.93 L1074.17,535.96 L1074.36,535.88 L1074.56,535.82 L1074.75,535.92 L1074.95,535.81 L1075.14,535.69 L1075.34,535.62 L1075.54,535.54 L1075.73,535.94 L1075.93,535.88 L1076.12,536.22 L1076.32,535.51 L1076.51,535.93 L1076.71,535.82 L1076.91,535.73 L1077.10,536.04 L1077.30,535.74 L1077.49,535.82 L1077.69,536.11 L1077.88,535.77 L1078.08,535.62 L1078.27,536.12 L1078.47,535.68 L1078.67,535.78 L1078.86,535.74 L1079.06,535.74 L1079.25,535.60 L1079.45,535.85 L1079.64,535.67 L1079.84,535.88 L1080.04,535.70 L1080.23,535.95 L1080.43,535.83 L1080.62,535.53 L1080.82,535.74 L1081.01,535.84 L1081.21,536.00 L1081.40,535.95 L1081.60,535.78 L1081.80,535.66 L1081.99,535.75 L1082.19,535.73 L1082.38,535.23 L1082.58,535.00 L1082.77,535.29 L1082.97,535.31 L1083.17,535.08 L1083.36,535.21 L1083.56,535.27 L1083.75,535.32 L1083.95,535.27 L1084.14,535.12 L1084.34,535.17 L1084.54,535.42 L1084.73,535.15 L1084.93,535.20 L1085.12,535.39 L1085.32,535.10 L1085.51,535.27 L1085.71,535.28 L1085.90,535.09 L1086.10,535.01 L1086.30,535.34 L1086.49,535.15 L1086.69,535.37 L1086.88,534.85 L1087.08,535.31 L1087.27,535.03 L1087.47,535.33 L1087.67,535.09 L1087.86,534.86 L1088.06,535.64 L1088.25,535.30 L1088.45,535.14 L1088.64,535.24 L1088.84,535.33 L1089.04,534.87 L1089.23,535.21 L1089.43,535.49 L1089.62,535.09 L1089.82,535.51 L1090.01,535.04 L1090.21,535.32 L1090.40,535.20 L1090.60,535.02 L1090.80,535.21 L1090.99,535.45 L1091.19,535.50 L1091.38,535.03 L1091.58,535.10 L1091.77,535.36 L1091.97,535.08 L1092.17,535.14 L1092.36,535.12 L1092.56,535.59 L1092.75,535.27 L1092.95,535.08 L1093.14,535.10 L1093.34,535.08 L1093.53,535.63 L1093.73,535.20 L1093.93,535.14 L1094.12,534.81 L1094.32,535.38 L1094.51,535.28 L1094.71,535.22 L1094.90,535.08 L1095.10,535.30 L1095.30,535.04 L1095.49,535.35 L1095.69,535.18 L1095.88,535.31 L1096.08,535.20 L1096.27,535.34 L1096.47,535.49 L1096.67,535.05 L1096.86,535.17 L1097.06,535.32 L1097.25,535.19 L1097.45,535.06 L1097.64,535.38 L1097.84,535.24 L1098.03,535.14 L1098.23,535.14 L1098.43,535.28 L1098.62,535.57 L1098.82,535.02 L1099.01,535.17 L1099.21,535.22 L1099.40,535.27 L1099.60,535.18 L1099.80,535.29 L1099.99,535.39 L1100.19,535.35 L1100.38,535.32 L1100.58,535.32 L1100.77,535.41 L1100.97,535.12 L1101.16,535.44 L1101.36,535.12 L1101.56,535.39 L1101.75,535.17 L1101.95,535.00 L1102.14,535.19 L1102.34,535.34 L1102.53,535.22 L1102.73,535.20 L1102.93,535.51 L1103.12,535.32 L1103.32,535.20 L1103.51,535.30 L1103.71,535.21 L1103.90,535.10 L1104.10,535.10 L1104.30,535.08 L1104.49,535.13 L1104.69,535.27 L1104.88,535.23 L1105.08,535.27 L1105.27,535.28 L1105.47,535.25 L1105.66,535.51 L1105.86,535.28 L1106.06,535.23 L1106.25,535.38 L1106.45,535.23 L1106.64,535.14 L1106.84,535.25 L1107.03,534.89 L1107.23,535.65 L1107.43,535.26 L1107.62,535.52 L1107.82,535.06 L1108.01,534.79 L1108.21,535.63 L1108.40,535.20 L1108.60,535.14 L1108.79,535.27 L1108.99,535.13 L1109.19,535.59 L1109.38,535.09 L1109.58,535.16 L1109.77,535.22 L1109.97,535.32 L1110.16,535.12 L1110.36,535.30 L1110.56,535.19 L1110.75,535.31 L1110.95,535.59 L1111.14,535.23 L1111.34,535.19 L1111.53,535.10 L1111.73,535.37 L1111.93,535.23 L1112.12,535.12 L1112.32,535.20 L1112.51,535.02 L1112.71,534.90 L1112.90,535.37 L1113.10,535.54 L1113.29,535.08 L1113.49,534.97 L1113.69,535.07 L1113.88,535.09 L1114.08,535.33 L1114.27,535.34 L1114.47,535.08 L1114.66,535.37 L1114.86,535.52 L1115.06,535.39 L1115.25,534.82 L1115.45,534.91 L1115.64,535.34 L1115.84,535.34 L1116.03,535.19 L1116.23,535.35 L1116.43,535.50 L1116.62,535.73 L1116.82,535.89 L1117.01,535.50 L1117.21,535.81 L1117.40,535.68 L1117.60,535.72 L1117.79,535.77 L1117.99,535.66 L1118.19,535.83 L1118.38,536.02 L1118.58,536.07 L1118.77,535.92 L1118.97,535.84 L1119.16,535.72 L1119.36,535.71 L1119.56,535.62 L1119.75,535.69 L1119.95,535.84 L1120.14,535.83 L1120.34,536.06 L1120.53,535.74 L1120.73,535.64 L1120.92,535.63 L1121.12,535.73 L1121.32,535.74 L1121.51,535.56 L1121.71,535.71 L1121.90,535.59 L1122.10,535.62 L1122.29,535.68 L1122.49,535.50 L1122.69,535.81 L1122.88,535.77 L1123.08,535.85 L1123.27,535.84 L1123.47,535.46 L1123.66,535.43 L1123.86,535.71 L1124.06,535.62 L1124.25,535.52 L1124.45,535.58 L1124.64,535.52 L1124.84,535.92 L1125.03,535.82 L1125.23,535.64 L1125.42,535.48 L1125.62,535.70 L1125.82,535.85 L1126.01,535.77 L1126.21,535.82 L1126.40,535.85 L1126.60,535.47 L1126.79,535.82 L1126.99,535.71 L1127.19,535.36 L1127.38,535.52 L1127.58,535.66 L1127.77,535.81 L1127.97,535.65 L1128.16,535.45 L1128.36,535.61 L1128.55,535.51 L1128.75,535.70 L1128.95,535.63 L1129.14,535.75 L1129.34,535.64 L1129.53,535.50 L1129.73,535.95 L1129.92,535.72 L1130.12,535.68 L1130.32,535.81 L1130.51,535.76 L1130.71,535.59 L1130.90,535.39 L1131.10,535.61 L1131.29,535.66 L1131.49,535.97 L1131.69,535.40 L1131.88,535.70 L1132.08,535.72 L1132.27,535.90 L1132.47,535.72 L1132.66,535.89 L1132.86,535.70 L1133.05,535.64 L1133.25,535.71 L1133.45,535.67 L1133.64,535.85 L1133.84,535.48 L1134.03,535.82 L1134.23,536.01 L1134.42,535.74 L1134.62,535.84 L1134.82,535.88 L1135.01,535.77 L1135.21,535.67 L1135.40,535.91 L1135.60,535.74 L1135.79,535.48 L1135.99,535.60 L1136.18,535.74 L1136.38,535.69 L1136.58,535.73 L1136.77,535.72 L1136.97,535.59 L1137.16,535.73 L1137.36,536.11 L1137.55,535.72 L1137.75,535.86 L1137.95,535.61 L1138.14,535.81 L1138.34,535.69 L1138.53,535.36 L1138.73,535.89 L1138.92,535.90 L1139.12,535.94 L1139.32,536.11 L1139.51,536.02 L1139.71,535.65 L1139.90,535.82 L1140.10,536.02 L1140.29,535.96 L1140.49,535.61 L1140.68,535.84 L1140.88,535.77 L1141.08,535.66 L1141.27,535.49 L1141.47,535.40 L1141.66,535.55 L1141.86,535.69 L1142.05,535.68 L1142.25,535.42 L1142.45,535.48 L1142.64,535.76 L1142.84,535.64 L1143.03,535.67 L1143.23,535.71 L1143.42,535.80 L1143.62,535.93 L1143.82,535.80 L1144.01,535.97 L1144.21,535.51 L1144.40,535.63 L1144.60,535.91 L1144.79,535.49 L1144.99,535.57 L1145.18,536.03 L1145.38,535.41 L1145.58,535.58 L1145.77,535.38 L1145.97,535.92 L1146.16,535.63 L1146.36,535.65 L1146.55,535.68 L1146.75,535.69 L1146.95,535.54 L1147.14,535.96 L1147.34,535.92 L1147.53,535.94 L1147.73,535.81 L1147.92,535.81 L1148.12,535.65 L1148.31,535.67 L1148.51,535.71 L1148.71,535.82 L1148.90,535.79 L1149.10,535.56 L1149.29,535.59 L1149.49,535.70 L1149.68,535.77 L1149.88,535.46 L1150.08,535.81 L1150.27,535.61 L1150.47,535.53 L1150.66,535.61 L1150.86,535.44 L1151.05,535.75 L1151.25,535.41 L1151.45,535.54 L1151.64,535.83 L1151.84,535.46 L1152.03,535.72 L1152.23,535.36 L1152.42,535.68 L1152.62,535.60 L1152.81,535.53 L1153.01,535.63 L1153.21,535.53 L1153.40,535.66 L1153.60,535.46 L1153.79,535.57 L1153.99,535.54 L1154.18,536.02 L1154.38,535.38 L1154.58,535.57 L1154.77,535.86 L1154.97,535.56 L1155.16,535.50 L1155.36,535.40 L1155.55,535.75 L1155.75,535.32 L1155.94,535.60 L1156.14,535.18 L1156.34,535.60 L1156.53,535.46 L1156.73,535.63 L1156.92,535.75 L1157.12,535.39 L1157.31,535.42 L1157.51,535.32 L1157.71,535.43 L1157.90,535.67 L1158.10,535.84 L1158.29,535.68 L1158.49,535.68 L1158.68,535.70 L1158.88,535.48 L1159.08,535.52 L1159.27,535.62 L1159.47,535.54 L1159.66,535.60 L1159.86,535.54 L1160.05,535.45 L1160.25,535.41 L1160.44,535.68 L1160.64,535.82 L1160.84,535.34 L1161.03,535.55 L1161.23,535.39 L1161.42,535.84 L1161.62,535.63 L1161.81,535.57 L1162.01,535.81 L1162.21,535.66 L1162.40,535.45 L1162.60,535.40 L1162.79,535.31 L1162.99,535.71 L1163.18,535.80 L1163.38,535.49 L1163.57,535.42 L1163.77,535.54 L1163.97,535.78 L1164.16,535.44 L1164.36,535.44 L1164.55,535.48 L1164.75,535.65 L1164.94,535.52 L1165.14,535.44 L1165.34,535.66 L1165.53,535.87 L1165.73,535.52 L1165.92,535.49 L1166.12,535.57 L1166.31,535.43 L1166.51,535.67 L1166.71,535.58 L1166.90,535.62 L1167.10,535.48 L1167.29,535.31 L1167.49,535.61 L1167.68,535.24 L1167.88,535.32 L1168.07,535.44 L1168.27,535.48 L1168.47,535.28 L1168.66,535.60 L1168.86,535.59 L1169.05,535.74 L1169.25,535.49 L1169.44,535.35 L1169.64,535.48 L1169.84,535.50 L1170.03,535.60 L1170.23,535.54 L1170.42,535.80 L1170.62,535.40 L1170.81,535.64 L1171.01,535.75 L1171.21,535.69 L1171.40,535.71 L1171.60,535.43 L1171.79,535.40 L1171.99,535.79 L1172.18,535.42 L1172.38,535.43 L1172.57,535.67 L1172.77,535.81 L1172.97,535.69 L1173.16,535.67 L1173.36,535.52 L1173.55,535.63 L1173.75,535.90 L1173.94,535.53 L1174.14,535.82 L1174.34,535.42 L1174.53,535.77 L1174.73,535.68 L1174.92,535.71 L1175.12,535.66 L1175.31,535.36 L1175.51,535.43 L1175.70,535.47 L1175.90,535.52 L1176.10,535.82 L1176.29,535.66 L1176.49,535.66 L1176.68,535.73 L1176.88,535.49 L1177.07,535.69 L1177.27,535.69 L1177.47,535.74 L1177.66,535.91 L1177.86,535.47 L1178.05,535.35 L1178.25,535.54 L1178.44,535.73 L1178.64,536.01 L1178.84,535.54 L1179.03,535.37 L1179.23,535.52 L1179.42,535.42 L1179.62,535.33 L1179.81,535.39 L1180.01,535.64 L1180.20,535.40 L1180.40,535.44 L1180.60,535.82 L1180.79,535.64 L1180.99,535.80 L1181.18,535.59 L1181.38,535.48 L1181.57,535.75 L1181.77,535.91 L1181.97,535.36 L1182.16,535.51 L1182.36,535.33 L1182.55,535.79 L1182.75,535.40 L1182.94,535.23 L1183.14,535.24 L1183.33,535.61 L1183.53,535.53 L1183.73,535.60 L1183.92,535.41 L1184.12,535.40 L1184.31,535.56 L1184.51,535.79 L1184.70,535.45 L1184.90,535.65" fill="none" stroke="#0000ff" stroke-width="2.3" stroke-linejoin="miter" />
<rect x="1108.80" y="519.80" width="72.90" height="15.60" fill="rgba(255,255,255,0.8)" stroke="rgba(204,204,204,0.8)" stroke-width="1.0" rx="2.5"/>
<line x1="1111.20" y1="527.80" x2="1133.60" y2="527.80" stroke="#0000ff" stroke-width="1.6" stroke-linecap="butt"/>
<text transform="translate(1136.99,530.70) scale(1.1315,1)" x="-0.01 6.11 13.05 18.91 24.77 30.63" font-size="10.94" fill="#000">y=4648</text>
<rect x="911.00" y="517.00" width="273.90" height="120.00" fill="none" stroke="#000" stroke-width="1.6" />
<line x1="904.06" y1="616.59" x2="911.00" y2="616.59" stroke="#000" stroke-width="1.6" stroke-linecap="butt"/>
<text transform="translate(876.99,621.14) scale(1.0694,1)" x="0.05 5.83 11.62" font-size="10.21" fill="#000">600</text>
<line x1="904.06" y1="575.78" x2="911.00" y2="575.78" stroke="#000" stroke-width="1.6" stroke-linecap="butt"/>
<text transform="translate(876.99,580.32) scale(1.0656,1)" x="0.06 5.87 11.67" font-size="10.21" fill="#000">800</text>
<line x1="904.06" y1="534.96" x2="911.00" y2="534.96" stroke="#000" stroke-width="1.6" stroke-linecap="butt"/>
<text transform="translate(870.81,539.51) scale(1.0695,1)" x="-0.01 5.83 11.62 17.40" font-size="10.21" fill="#000">1000</text>
<line x1="911.00" y1="637.00" x2="911.00" y2="643.94" stroke="#000" stroke-width="1.6" stroke-linecap="butt"/>
<text transform="translate(908.15,659.69) scale(1.0041,1)" font-size="10.21" fill="#000">0</text>
<line x1="965.90" y1="637.00" x2="965.90" y2="643.94" stroke="#000" stroke-width="1.6" stroke-linecap="butt"/>
<text transform="translate(953.32,659.69) scale(1.0695,1)" x="-0.01 5.83 11.62 17.40" font-size="10.21" fill="#000">1000</text>
<line x1="1020.80" y1="637.00" x2="1020.80" y2="643.94" stroke="#000" stroke-width="1.6" stroke-linecap="butt"/>
<text transform="translate(1008.40,659.69) scale(1.0728,1)" x="-0.08 5.81 11.57 17.34" font-size="10.21" fill="#000">2000</text>
<line x1="1075.70" y1="637.00" x2="1075.70" y2="643.94" stroke="#000" stroke-width="1.6" stroke-linecap="butt"/>
<text transform="translate(1063.28,659.69) scale(1.0654,1)" x="0.08 5.87 11.67 17.48" font-size="10.21" fill="#000">3000</text>
<line x1="1130.60" y1="637.00" x2="1130.60" y2="643.94" stroke="#000" stroke-width="1.6" stroke-linecap="butt"/>
<text transform="translate(1118.32,659.69) scale(1.0700,1)" x="0.05 5.83 11.61 17.39" font-size="10.21" fill="#000">4000</text>
<text transform="translate(1045.11,677.80) scale(0.9531,1)" font-size="10.94" fill="#000">X</text>
<text transform="translate(855.90,578.00) rotate(-90) translate(-17.45,3.48) scale(1.0755,1)" x="-0.19 5.25 11.26 17.44 23.89 27.20" font-size="10.94" fill="#000">counts</text>
<text transform="translate(1198.00,575.50) rotate(90) translate(-19.47,3.91) scale(1.1090,1)" x="-0.27 5.08 11.41 14.80 17.89 20.36 26.36 29.37" font-size="10.94" fill="#000">cut in x</text>
<path d="M911.00,707.50 L911.20,707.56 L911.39,707.34 L911.59,707.42 L911.78,707.68 L911.98,707.55 L912.17,707.31 L912.37,707.69 L912.57,707.53 L912.76,707.41 L912.96,707.40 L913.15,707.52 L913.35,707.82 L913.54,707.81 L913.74,707.56 L913.93,707.54 L914.13,707.19 L914.33,707.74 L914.52,707.42 L914.72,707.48 L914.91,707.88 L915.11,707.74 L915.30,707.58 L915.50,707.68 L915.70,707.63 L915.89,707.53 L916.09,707.73 L916.28,707.53 L916.48,707.71 L916.67,707.69 L916.87,707.51 L917.06,707.70 L917.26,707.56 L917.46,707.34 L917.65,707.60 L917.85,707.63 L918.04,707.48 L918.24,707.66 L918.43,707.43 L918.63,707.81 L918.83,707.50 L919.02,707.69 L919.22,707.73 L919.41,707.31 L919.61,707.74 L919.80,707.32 L920.00,707.49 L920.20,707.36 L920.39,707.76 L920.59,707.41 L920.78,707.36 L920.98,707.62 L921.17,707.62 L921.37,707.20 L921.56,707.57 L921.76,707.67 L921.96,707.71 L922.15,707.53 L922.35,707.55 L922.54,707.57 L922.74,707.32 L922.93,707.66 L923.13,707.53 L923.33,707.36 L923.52,707.77 L923.72,707.43 L923.91,707.30 L924.11,707.82 L924.30,707.78 L924.50,707.77 L924.70,707.90 L924.89,707.53 L925.09,707.91 L925.28,707.52 L925.48,707.36 L925.67,707.87 L925.87,707.65 L926.06,707.92 L926.26,707.47 L926.46,707.72 L926.65,707.65 L926.85,707.59 L927.04,707.51 L927.24,707.66 L927.43,707.60 L927.63,707.69 L927.83,707.58 L928.02,707.79 L928.22,707.59 L928.41,707.92 L928.61,707.68 L928.80,707.29 L929.00,707.59 L929.19,707.81 L929.39,707.56 L929.59,707.76 L929.78,707.87 L929.98,707.72 L930.17,707.48 L930.37,707.54 L930.56,707.62 L930.76,707.75 L930.96,707.78 L931.15,707.38 L931.35,707.56 L931.54,707.76 L931.74,707.95 L931.93,707.83 L932.13,707.20 L932.33,707.79 L932.52,707.61 L932.72,707.57 L932.91,707.63 L933.11,707.65 L933.30,707.83 L933.50,707.77 L933.69,707.33 L933.89,707.73 L934.09,707.46 L934.28,707.88 L934.48,707.65 L934.67,707.56 L934.87,707.43 L935.06,707.79 L935.26,707.51 L935.46,707.54 L935.65,707.72 L935.85,707.52 L936.04,707.75 L936.24,707.73 L936.43,707.61 L936.63,708.05 L936.82,707.62 L937.02,707.77 L937.22,707.84 L937.41,707.67 L937.61,707.48 L937.80,707.67 L938.00,707.40 L938.19,707.79 L938.39,707.82 L938.59,707.35 L938.78,707.54 L938.98,707.45 L939.17,707.74 L939.37,707.47 L939.56,707.56 L939.76,707.50 L939.96,707.60 L940.15,707.41 L940.35,707.71 L940.54,707.76 L940.74,707.84 L940.93,707.41 L941.13,707.72 L941.32,707.77 L941.52,707.76 L941.72,707.68 L941.91,707.81 L942.11,707.65 L942.30,707.70 L942.50,707.69 L942.69,707.76 L942.89,707.60 L943.09,707.68 L943.28,707.58 L943.48,707.56 L943.67,707.55 L943.87,707.96 L944.06,707.69 L944.26,707.73 L944.45,707.48 L944.65,707.86 L944.85,707.72 L945.04,707.65 L945.24,707.66 L945.43,707.44 L945.63,707.67 L945.82,707.44 L946.02,707.84 L946.22,707.90 L946.41,707.40 L946.61,707.53 L946.80,707.52 L947.00,707.58 L947.19,707.52 L947.39,707.80 L947.59,707.45 L947.78,707.69 L947.98,707.44 L948.17,707.59 L948.37,707.93 L948.56,707.81 L948.76,707.42 L948.95,707.62 L949.15,707.67 L949.35,707.56 L949.54,707.67 L949.74,707.69 L949.93,707.59 L950.13,707.58 L950.32,707.35 L950.52,707.59 L950.72,707.29 L950.91,707.31 L951.11,707.32 L951.30,707.43 L951.50,707.58 L951.69,707.58 L951.89,707.63 L952.09,707.72 L952.28,707.61 L952.48,707.71 L952.67,707.33 L952.87,707.51 L953.06,707.68 L953.26,707.92 L953.45,707.61 L953.65,707.67 L953.85,707.78 L954.04,707.79 L954.24,707.97 L954.43,707.51 L954.63,707.61 L954.82,707.18 L955.02,707.61 L955.22,707.63 L955.41,707.37 L955.61,707.58 L955.80,707.58 L956.00,707.66 L956.19,707.70 L956.39,707.36 L956.58,707.44 L956.78,707.32 L956.98,707.66 L957.17,707.60 L957.37,707.75 L957.56,707.44 L957.76,707.83 L957.95,707.51 L958.15,707.42 L958.35,707.37 L958.54,707.76 L958.74,707.42 L958.93,707.72 L959.13,707.73 L959.32,707.82 L959.52,707.41 L959.72,707.33 L959.91,707.70 L960.11,707.73 L960.30,707.66 L960.50,707.19 L960.69,707.44 L960.89,707.69 L961.08,707.90 L961.28,707.71 L961.48,707.41 L961.67,707.30 L961.87,707.65 L962.06,707.72 L962.26,707.69 L962.45,707.91 L962.65,707.45 L962.85,707.78 L963.04,707.43 L963.24,707.88 L963.43,707.81 L963.63,707.56 L963.82,707.73 L964.02,707.47 L964.21,707.60 L964.41,707.79 L964.61,707.50 L964.80,707.46 L965.00,707.92 L965.19,707.30 L965.39,707.52 L965.58,707.48 L965.78,707.91 L965.98,707.72 L966.17,707.66 L966.37,707.43 L966.56,707.84 L966.76,707.75 L966.95,707.93 L967.15,707.64 L967.35,707.55 L967.54,707.88 L967.74,707.70 L967.93,707.52 L968.13,707.34 L968.32,707.49 L968.52,707.65 L968.71,707.80 L968.91,707.76 L969.11,707.71 L969.30,707.58 L969.50,707.61 L969.69,707.33 L969.89,707.56 L970.08,707.78 L970.28,707.35 L970.48,707.45 L970.67,707.59 L970.87,707.72 L971.06,707.91 L971.26,707.77 L971.45,707.45 L971.65,707.73 L971.84,707.82 L972.04,707.57 L972.24,707.56 L972.43,707.50 L972.63,707.50 L972.82,707.37 L973.02,707.74 L973.21,707.44 L973.41,707.76 L973.61,707.49 L973.80,707.57 L974.00,707.56 L974.19,707.44 L974.39,707.61 L974.58,707.42 L974.78,707.46 L974.98,707.58 L975.17,707.70 L975.37,707.73 L975.56,707.69 L975.76,707.64 L975.95,707.61 L976.15,707.11 L976.34,707.50 L976.54,707.48 L976.74,707.74 L976.93,707.72 L977.13,707.65 L977.32,707.57 L977.52,707.77 L977.71,707.34 L977.91,707.69 L978.11,707.43 L978.30,707.98 L978.50,707.60 L978.69,707.56 L978.89,707.57 L979.08,707.50 L979.28,707.56 L979.48,707.58 L979.67,707.91 L979.87,707.72 L980.06,707.99 L980.26,707.50 L980.45,707.55 L980.65,707.63 L980.84,707.74 L981.04,707.70 L981.24,707.30 L981.43,707.32 L981.63,707.61 L981.82,707.39 L982.02,707.86 L982.21,707.92 L982.41,707.68 L982.61,707.75 L982.80,707.69 L983.00,707.57 L983.19,707.11 L983.39,707.71 L983.58,707.59 L983.78,707.56 L983.97,707.61 L984.17,707.45 L984.37,707.31 L984.56,707.81 L984.76,707.58 L984.95,707.65 L985.15,707.54 L985.34,707.85 L985.54,707.89 L985.74,707.98 L985.93,707.52 L986.13,707.57 L986.32,707.59 L986.52,707.99 L986.71,707.66 L986.91,707.73 L987.11,707.83 L987.30,707.75 L987.50,707.49 L987.69,707.51 L987.89,707.61 L988.08,707.52 L988.28,707.70 L988.47,707.59 L988.67,707.60 L988.87,707.51 L989.06,707.61 L989.26,707.63 L989.45,707.62 L989.65,707.71 L989.84,707.24 L990.04,707.52 L990.24,707.53 L990.43,707.23 L990.63,707.37 L990.82,707.86 L991.02,707.49 L991.21,707.47 L991.41,707.29 L991.60,707.39 L991.80,707.48 L992.00,707.79 L992.19,707.74 L992.39,707.56 L992.58,707.52 L992.78,707.77 L992.97,707.67 L993.17,707.67 L993.37,707.59 L993.56,707.55 L993.76,707.65 L993.95,707.80 L994.15,707.40 L994.34,707.34 L994.54,707.62 L994.74,707.43 L994.93,707.53 L995.13,707.49 L995.32,707.52 L995.52,707.73 L995.71,707.51 L995.91,707.44 L996.10,707.75 L996.30,707.28 L996.50,707.26 L996.69,707.30 L996.89,707.28 L997.08,707.48 L997.28,707.66 L997.47,707.70 L997.67,707.74 L997.87,707.58 L998.06,707.61 L998.26,707.49 L998.45,707.93 L998.65,707.22 L998.84,707.23 L999.04,707.61 L999.23,707.49 L999.43,707.52 L999.63,707.56 L999.82,707.64 L1000.02,707.62 L1000.21,707.74 L1000.41,707.57 L1000.60,707.61 L1000.80,707.55 L1001.00,707.74 L1001.19,707.60 L1001.39,707.59 L1001.58,707.50 L1001.78,707.78 L1001.97,707.53 L1002.17,707.44 L1002.37,707.50 L1002.56,707.66 L1002.76,707.68 L1002.95,707.64 L1003.15,707.48 L1003.34,707.35 L1003.54,707.63 L1003.73,707.71 L1003.93,707.54 L1004.13,707.57 L1004.32,707.75 L1004.52,707.72 L1004.71,707.62 L1004.91,707.49 L1005.10,707.80 L1005.30,707.77 L1005.50,707.52 L1005.69,707.80 L1005.89,707.58 L1006.08,707.54 L1006.28,707.62 L1006.47,707.77 L1006.67,707.61 L1006.87,707.66 L1007.06,707.55 L1007.26,707.74 L1007.45,707.42 L1007.65,707.88 L1007.84,707.63 L1008.04,707.60 L1008.23,707.45 L1008.43,707.70 L1008.63,707.51 L1008.82,707.70 L1009.02,707.48 L1009.21,707.32 L1009.41,707.67 L1009.60,707.53 L1009.80,707.75 L1010.00,707.44 L1010.19,707.40 L1010.39,707.60 L1010.58,707.79 L1010.78,707.54 L1010.97,707.41 L1011.17,707.42 L1011.36,707.47 L1011.56,707.90 L1011.76,707.71 L1011.95,707.37 L1012.15,707.80 L1012.34,707.42 L1012.54,707.29 L1012.73,707.48 L1012.93,707.42 L1013.13,707.66 L1013.32,707.80 L1013.52,707.62 L1013.71,707.63 L1013.91,707.61 L1014.10,707.49 L1014.30,707.63 L1014.50,707.57 L1014.69,707.53 L1014.89,707.60 L1015.08,707.30 L1015.28,707.53 L1015.47,707.59 L1015.67,707.64 L1015.86,707.70 L1016.06,707.38 L1016.26,707.58 L1016.45,707.78 L1016.65,707.69 L1016.84,707.62 L1017.04,707.68 L1017.23,707.43 L1017.43,707.79 L1017.63,707.52 L1017.82,707.58 L1018.02,707.79 L1018.21,707.59 L1018.41,707.62 L1018.60,707.52 L1018.80,707.68 L1018.99,707.55 L1019.19,707.87 L1019.39,707.78 L1019.58,707.47 L1019.78,707.43 L1019.97,707.60 L1020.17,707.70 L1020.36,707.43 L1020.56,707.94 L1020.76,707.73 L1020.95,707.49 L1021.15,707.50 L1021.34,707.77 L1021.54,707.91 L1021.73,707.36 L1021.93,707.58 L1022.13,707.75 L1022.32,707.59 L1022.52,707.45 L1022.71,708.03 L1022.91,707.42 L1023.10,707.48 L1023.30,707.94 L1023.49,707.48 L1023.69,707.89 L1023.89,707.42 L1024.08,707.54 L1024.28,707.23 L1024.47,707.70 L1024.67,707.60 L1024.86,707.43 L1025.06,707.71 L1025.26,707.72 L1025.45,707.66 L1025.65,707.61 L1025.84,707.78 L1026.04,707.52 L1026.23,707.51 L1026.43,707.59 L1026.62,707.32 L1026.82,707.66 L1027.02,707.39 L1027.21,707.69 L1027.41,707.48 L1027.60,707.92 L1027.80,707.57 L1027.99,707.63 L1028.19,707.68 L1028.39,707.70 L1028.58,707.66 L1028.78,707.72 L1028.97,707.96 L1029.17,707.70 L1029.36,707.69 L1029.56,707.69 L1029.76,707.78 L1029.95,707.62 L1030.15,707.47 L1030.34,707.64 L1030.54,707.68 L1030.73,707.38 L1030.93,707.44 L1031.12,707.45 L1031.32,707.41 L1031.52,707.66 L1031.71,707.62 L1031.91,707.42 L1032.10,707.69 L1032.30,707.62 L1032.49,707.54 L1032.69,707.54 L1032.89,707.65 L1033.08,707.44 L1033.28,707.63 L1033.47,707.48 L1033.67,707.43 L1033.86,707.49 L1034.06,707.48 L1034.26,707.79 L1034.45,707.82 L1034.65,707.70 L1034.84,707.52 L1035.04,707.36 L1035.23,707.80 L1035.43,707.55 L1035.62,707.74 L1035.82,707.72 L1036.02,707.65 L1036.21,707.49 L1036.41,707.57 L1036.60,707.41 L1036.80,707.76 L1036.99,707.46 L1037.19,707.45 L1037.39,707.59 L1037.58,707.52 L1037.78,707.69 L1037.97,707.78 L1038.17,707.67 L1038.36,707.71 L1038.56,707.13 L1038.75,707.68 L1038.95,707.33 L1039.15,707.57 L1039.34,707.55 L1039.54,707.48 L1039.73,707.73 L1039.93,707.45 L1040.12,707.54 L1040.32,707.85 L1040.52,707.50 L1040.71,707.51 L1040.91,707.53 L1041.10,707.34 L1041.30,707.67 L1041.49,707.52 L1041.69,707.48 L1041.89,707.75 L1042.08,707.41 L1042.28,707.84 L1042.47,707.81 L1042.67,707.52 L1042.86,707.78 L1043.06,707.62 L1043.25,707.87 L1043.45,707.59 L1043.65,707.79 L1043.84,707.55 L1044.04,707.85 L1044.23,707.53 L1044.43,707.65 L1044.62,707.59 L1044.82,707.61 L1045.02,707.58 L1045.21,707.82 L1045.41,708.02 L1045.60,707.60 L1045.80,707.76 L1045.99,707.68 L1046.19,707.53 L1046.38,707.93 L1046.58,707.73 L1046.78,707.70 L1046.97,707.78 L1047.17,707.55 L1047.36,707.63 L1047.56,707.74 L1047.75,707.76 L1047.95,707.47 L1048.15,707.71 L1048.34,707.51 L1048.54,707.53 L1048.73,707.91 L1048.93,707.78 L1049.12,707.60 L1049.32,707.55 L1049.52,707.47 L1049.71,707.47 L1049.91,707.43 L1050.10,707.66 L1050.30,707.64 L1050.49,707.48 L1050.69,707.67 L1050.88,707.43 L1051.08,707.86 L1051.28,707.50 L1051.47,707.63 L1051.67,707.92 L1051.86,707.44 L1052.06,707.55 L1052.25,707.60 L1052.45,707.78 L1052.65,707.68 L1052.84,707.36 L1053.04,707.74 L1053.23,708.17 L1053.43,707.74 L1053.62,707.80 L1053.82,707.62 L1054.01,707.67 L1054.21,707.75 L1054.41,707.74 L1054.60,707.43 L1054.80,707.84 L1054.99,707.28 L1055.19,707.69 L1055.38,707.78 L1055.58,707.47 L1055.78,707.51 L1055.97,707.77 L1056.17,707.48 L1056.36,707.90 L1056.56,707.75 L1056.75,707.42 L1056.95,707.64 L1057.15,707.82 L1057.34,707.52 L1057.54,707.45 L1057.73,707.61 L1057.93,707.90 L1058.12,707.66 L1058.32,707.53 L1058.51,707.48 L1058.71,707.30 L1058.91,707.64 L1059.10,707.68 L1059.30,707.61 L1059.49,707.41 L1059.69,707.76 L1059.88,707.39 L1060.08,708.05 L1060.28,707.47 L1060.47,707.71 L1060.67,707.53 L1060.86,707.49 L1061.06,707.80 L1061.25,707.62 L1061.45,707.56 L1061.64,707.51 L1061.84,707.75 L1062.04,707.76 L1062.23,707.92 L1062.43,707.19 L1062.62,707.63 L1062.82,707.64 L1063.01,707.85 L1063.21,707.45 L1063.41,707.69 L1063.60,707.37 L1063.80,707.46 L1063.99,707.60 L1064.19,707.48 L1064.38,707.78 L1064.58,707.66 L1064.78,707.70 L1064.97,707.81 L1065.17,707.60 L1065.36,707.63 L1065.56,707.37 L1065.75,708.15 L1065.95,707.71 L1066.14,707.75 L1066.34,707.68 L1066.54,707.53 L1066.73,707.54 L1066.93,707.60 L1067.12,707.68 L1067.32,707.52 L1067.51,707.54 L1067.71,707.90 L1067.91,707.65 L1068.10,707.83 L1068.30,707.80 L1068.49,707.58 L1068.69,707.59 L1068.88,707.58 L1069.08,707.75 L1069.28,707.64 L1069.47,707.75 L1069.67,707.54 L1069.86,707.49 L1070.06,707.32 L1070.25,707.40 L1070.45,707.73 L1070.64,707.68 L1070.84,707.76 L1071.04,707.55 L1071.23,707.28 L1071.43,707.49 L1071.62,707.96 L1071.82,707.81 L1072.01,707.81 L1072.21,707.52 L1072.41,707.60 L1072.60,707.55 L1072.80,707.31 L1072.99,707.74 L1073.19,707.74 L1073.38,707.28 L1073.58,707.55 L1073.77,707.73 L1073.97,707.93 L1074.17,707.85 L1074.36,708.00 L1074.56,707.59 L1074.75,707.60 L1074.95,707.44 L1075.14,707.63 L1075.34,707.72 L1075.54,707.72 L1075.73,707.29 L1075.93,707.89 L1076.12,707.57 L1076.32,707.60 L1076.51,707.50 L1076.71,707.67 L1076.91,707.52 L1077.10,707.47 L1077.30,707.63 L1077.49,707.68 L1077.69,707.63 L1077.88,707.76 L1078.08,707.64 L1078.27,707.65 L1078.47,707.57 L1078.67,707.38 L1078.86,707.39 L1079.06,707.68 L1079.25,707.50 L1079.45,707.55 L1079.64,707.48 L1079.84,707.60 L1080.04,707.56 L1080.23,707.68 L1080.43,707.73 L1080.62,707.46 L1080.82,707.39 L1081.01,707.49 L1081.21,707.53 L1081.40,707.56 L1081.60,707.68 L1081.80,707.89 L1081.99,707.49 L1082.19,707.57 L1082.38,707.69 L1082.58,707.76 L1082.77,707.39 L1082.97,707.90 L1083.17,707.31 L1083.36,707.50 L1083.56,707.21 L1083.75,707.72 L1083.95,707.61 L1084.14,707.69 L1084.34,707.58 L1084.54,707.64 L1084.73,707.72 L1084.93,707.43 L1085.12,707.73 L1085.32,707.69 L1085.51,707.51 L1085.71,707.69 L1085.90,707.67 L1086.10,707.54 L1086.30,707.66 L1086.49,707.81 L1086.69,707.62 L1086.88,707.64 L1087.08,707.32 L1087.27,707.78 L1087.47,707.44 L1087.67,707.73 L1087.86,707.66 L1088.06,707.66 L1088.25,707.56 L1088.45,707.46 L1088.64,707.32 L1088.84,707.71 L1089.04,707.38 L1089.23,707.44 L1089.43,707.47 L1089.62,707.73 L1089.82,707.46 L1090.01,707.62 L1090.21,707.54 L1090.40,707.65 L1090.60,707.49 L1090.80,707.42 L1090.99,707.42 L1091.19,707.64 L1091.38,707.44 L1091.58,707.36 L1091.77,707.76 L1091.97,707.36 L1092.17,707.82 L1092.36,707.51 L1092.56,707.51 L1092.75,707.36 L1092.95,707.56 L1093.14,707.68 L1093.34,707.73 L1093.53,707.81 L1093.73,707.48 L1093.93,707.64 L1094.12,707.72 L1094.32,707.52 L1094.51,707.73 L1094.71,707.67 L1094.90,707.68 L1095.10,707.33 L1095.30,707.36 L1095.49,707.63 L1095.69,707.86 L1095.88,707.56 L1096.08,707.59 L1096.27,707.55 L1096.47,707.51 L1096.67,707.65 L1096.86,707.45 L1097.06,707.47 L1097.25,707.57 L1097.45,707.67 L1097.64,707.68 L1097.84,707.49 L1098.03,707.78 L1098.23,707.63 L1098.43,707.73 L1098.62,707.83 L1098.82,707.50 L1099.01,707.61 L1099.21,707.60 L1099.40,707.46 L1099.60,707.85 L1099.80,707.61 L1099.99,707.56 L1100.19,707.47 L1100.38,707.78 L1100.58,707.49 L1100.77,707.57 L1100.97,707.38 L1101.16,707.42 L1101.36,707.51 L1101.56,707.25 L1101.75,707.60 L1101.95,707.67 L1102.14,707.66 L1102.34,707.76 L1102.53,707.61 L1102.73,707.91 L1102.93,707.62 L1103.12,707.53 L1103.32,707.44 L1103.51,707.66 L1103.71,707.38 L1103.90,707.71 L1104.10,707.62 L1104.30,707.91 L1104.49,707.73 L1104.69,707.73 L1104.88,707.36 L1105.08,707.52 L1105.27,707.78 L1105.47,707.52 L1105.66,707.53 L1105.86,707.64 L1106.06,707.60 L1106.25,707.65 L1106.45,707.69 L1106.64,707.89 L1106.84,707.62 L1107.03,707.40 L1107.23,707.37 L1107.43,707.65 L1107.62,707.72 L1107.82,707.64 L1108.01,707.46 L1108.21,707.55 L1108.40,707.70 L1108.60,707.54 L1108.79,707.64 L1108.99,707.52 L1109.19,707.67 L1109.38,707.84 L1109.58,707.59 L1109.77,707.48 L1109.97,707.78 L1110.16,707.62 L1110.36,707.46 L1110.56,707.66 L1110.75,707.71 L1110.95,707.28 L1111.14,707.47 L1111.34,707.44 L1111.53,707.75 L1111.73,707.34 L1111.93,707.87 L1112.12,707.68 L1112.32,707.48 L1112.51,707.39 L1112.71,707.75 L1112.90,707.71 L1113.10,707.57 L1113.29,707.91 L1113.49,707.50 L1113.69,707.51 L1113.88,707.67 L1114.08,707.52 L1114.27,707.48 L1114.47,707.55 L1114.66,707.52 L1114.86,707.36 L1115.06,707.68 L1115.25,707.58 L1115.45,707.69 L1115.64,707.44 L1115.84,707.67 L1116.03,707.53 L1116.23,707.58 L1116.43,707.59 L1116.62,707.33 L1116.82,707.62 L1117.01,707.38 L1117.21,707.47 L1117.40,707.39 L1117.60,707.63 L1117.79,707.46 L1117.99,707.48 L1118.19,707.70 L1118.38,707.56 L1118.58,707.62 L1118.77,707.61 L1118.97,707.40 L1119.16,707.72 L1119.36,707.87 L1119.56,707.88 L1119.75,707.67 L1119.95,707.70 L1120.14,707.60 L1120.34,707.51 L1120.53,707.32 L1120.73,707.55 L1120.92,707.53 L1121.12,707.72 L1121.32,707.51 L1121.51,707.39 L1121.71,707.39 L1121.90,707.91 L1122.10,707.46 L1122.29,707.35 L1122.49,707.47 L1122.69,707.84 L1122.88,707.65 L1123.08,707.51 L1123.27,707.54 L1123.47,707.73 L1123.66,707.74 L1123.86,707.45 L1124.06,707.81 L1124.25,707.38 L1124.45,707.60 L1124.64,707.56 L1124.84,707.81 L1125.03,707.70 L1125.23,707.49 L1125.42,707.83 L1125.62,707.28 L1125.82,707.82 L1126.01,707.79 L1126.21,707.60 L1126.40,707.53 L1126.60,707.49 L1126.79,707.66 L1126.99,707.64 L1127.19,707.64 L1127.38,707.69 L1127.58,708.01 L1127.77,707.45 L1127.97,707.56 L1128.16,707.58 L1128.36,707.70 L1128.55,707.56 L1128.75,707.60 L1128.95,707.61 L1129.14,707.43 L1129.34,707.87 L1129.53,707.56 L1129.73,707.77 L1129.92,707.65 L1130.12,707.37 L1130.32,707.77 L1130.51,707.62 L1130.71,707.70 L1130.90,707.45 L1131.10,707.76 L1131.29,707.87 L1131.49,707.52 L1131.69,707.66 L1131.88,707.65 L1132.08,707.43 L1132.27,707.74 L1132.47,707.66 L1132.66,707.58 L1132.86,707.54 L1133.05,707.68 L1133.25,707.44 L1133.45,707.25 L1133.64,707.67 L1133.84,707.31 L1134.03,707.93 L1134.23,707.38 L1134.42,707.66 L1134.62,707.58 L1134.82,707.66 L1135.01,707.70 L1135.21,707.80 L1135.40,707.66 L1135.60,707.40 L1135.79,707.42 L1135.99,707.66 L1136.18,707.69 L1136.38,707.71 L1136.58,707.79 L1136.77,707.32 L1136.97,707.50 L1137.16,707.58 L1137.36,707.68 L1137.55,707.76 L1137.75,707.40 L1137.95,707.48 L1138.14,707.75 L1138.34,707.45 L1138.53,707.78 L1138.73,707.50 L1138.92,707.75 L1139.12,707.67 L1139.32,707.52 L1139.51,707.53 L1139.71,707.44 L1139.90,707.73 L1140.10,707.35 L1140.29,707.39 L1140.49,707.60 L1140.68,707.53 L1140.88,707.72 L1141.08,707.63 L1141.27,707.81 L1141.47,707.59 L1141.66,707.57 L1141.86,707.39 L1142.05,707.45 L1142.25,707.47 L1142.45,707.66 L1142.64,707.64 L1142.84,707.66 L1143.03,707.57 L1143.23,707.91 L1143.42,707.48 L1143.62,707.85 L1143.82,707.68 L1144.01,707.60 L1144.21,707.68 L1144.40,707.34 L1144.60,707.62 L1144.79,707.36 L1144.99,707.42 L1145.18,707.68 L1145.38,707.54 L1145.58,707.40 L1145.77,707.65 L1145.97,707.59 L1146.16,707.69 L1146.36,707.59 L1146.55,707.66 L1146.75,707.59 L1146.95,707.45 L1147.14,707.38 L1147.34,707.58 L1147.53,707.57 L1147.73,707.47 L1147.92,707.65 L1148.12,707.77 L1148.31,707.43 L1148.51,707.75 L1148.71,707.46 L1148.90,707.75 L1149.10,707.32 L1149.29,707.77 L1149.49,707.47 L1149.68,707.37 L1149.88,707.75 L1150.08,707.37 L1150.27,707.73 L1150.47,707.88 L1150.66,707.49 L1150.86,707.49 L1151.05,707.63 L1151.25,708.00 L1151.45,707.61 L1151.64,707.65 L1151.84,707.66 L1152.03,707.65 L1152.23,707.88 L1152.42,707.69 L1152.62,707.32 L1152.81,707.36 L1153.01,707.66 L1153.21,707.71 L1153.40,707.54 L1153.60,707.44 L1153.79,707.49 L1153.99,707.79 L1154.18,707.58 L1154.38,707.58 L1154.58,707.38 L1154.77,707.41 L1154.97,707.52 L1155.16,707.41 L1155.36,707.66 L1155.55,707.36 L1155.75,707.67 L1155.94,707.54 L1156.14,707.46 L1156.34,707.75 L1156.53,707.71 L1156.73,707.88 L1156.92,707.58 L1157.12,707.61 L1157.31,707.65 L1157.51,707.52 L1157.71,707.93 L1157.90,707.61 L1158.10,707.59 L1158.29,707.64 L1158.49,707.48 L1158.68,707.33 L1158.88,707.67 L1159.08,707.75 L1159.27,707.70 L1159.47,707.59 L1159.66,707.51 L1159.86,707.74 L1160.05,707.45 L1160.25,707.76 L1160.44,707.47 L1160.64,707.54 L1160.84,707.53 L1161.03,707.26 L1161.23,707.64 L1161.42,707.63 L1161.62,707.53 L1161.81,707.47 L1162.01,707.81 L1162.21,707.56 L1162.40,707.72 L1162.60,707.50 L1162.79,707.39 L1162.99,707.59 L1163.18,707.62 L1163.38,707.57 L1163.57,708.07 L1163.77,707.48 L1163.97,707.51 L1164.16,707.58 L1164.36,707.66 L1164.55,707.72 L1164.75,707.63 L1164.94,707.41 L1165.14,707.62 L1165.34,707.39 L1165.53,708.01 L1165.73,707.67 L1165.92,707.56 L1166.12,707.60 L1166.31,707.86 L1166.51,707.71 L1166.71,707.41 L1166.90,707.81 L1167.10,707.76 L1167.29,707.77 L1167.49,707.69 L1167.68,707.50 L1167.88,707.51 L1168.07,707.92 L1168.27,707.37 L1168.47,707.70 L1168.66,707.69 L1168.86,707.34 L1169.05,707.62 L1169.25,707.80 L1169.44,707.70 L1169.64,707.72 L1169.84,707.76 L1170.03,707.65 L1170.23,707.46 L1170.42,707.55 L1170.62,707.82 L1170.81,707.16 L1171.01,707.76 L1171.21,707.58 L1171.40,707.60 L1171.60,707.48 L1171.79,707.65 L1171.99,707.53 L1172.18,707.27 L1172.38,707.59 L1172.57,707.77 L1172.77,707.55 L1172.97,707.73 L1173.16,707.66 L1173.36,707.57 L1173.55,707.55 L1173.75,707.65 L1173.94,707.47 L1174.14,707.63 L1174.34,707.81 L1174.53,707.46 L1174.73,707.66 L1174.92,707.41 L1175.12,707.71 L1175.31,707.51 L1175.51,707.55 L1175.70,708.03 L1175.90,707.84 L1176.10,707.78 L1176.29,707.38 L1176.49,707.90 L1176.68,707.46 L1176.88,707.43 L1177.07,707.52 L1177.27,707.50 L1177.47,707.68 L1177.66,707.60 L1177.86,707.57 L1178.05,707.54 L1178.25,707.49 L1178.44,707.63 L1178.64,707.71 L1178.84,707.69 L1179.03,707.54 L1179.23,707.86 L1179.42,707.80 L1179.62,707.67 L1179.81,707.69 L1180.01,707.64 L1180.20,708.02 L1180.40,707.66 L1180.60,707.64 L1180.79,707.48 L1180.99,707.91 L1181.18,707.65 L1181.38,707.53 L1181.57,707.53 L1181.77,707.41 L1181.97,707.44 L1182.16,707.77 L1182.36,707.50 L1182.55,707.65 L1182.75,707.73 L1182.94,707.36 L1183.14,707.70 L1183.33,707.74 L1183.53,707.67 L1183.73,707.74 L1183.92,707.44 L1184.12,707.54 L1184.31,707.38 L1184.51,707.54 L1184.70,707.70 L1184.90,707.44" fill="none" stroke="#0000ff" stroke-width="2.3" stroke-linejoin="miter" />
<rect x="1108.80" y="692.00" width="73.40" height="15.60" fill="rgba(255,255,255,0.8)" stroke="rgba(204,204,204,0.8)" stroke-width="1.0" rx="2.5"/>
<line x1="1111.20" y1="700.00" x2="1133.60" y2="700.00" stroke="#0000ff" stroke-width="1.6" stroke-linecap="butt"/>
<text transform="translate(1137.00,702.90) scale(1.1340,1)" x="-0.04 6.09 12.89 18.87 24.71 30.56" font-size="10.94" fill="#000">x=2480</text>
<rect x="911.00" y="689.00" width="273.90" height="120.20" fill="none" stroke="#000" stroke-width="1.6" />
<line x1="904.06" y1="788.76" x2="911.00" y2="788.76" stroke="#000" stroke-width="1.6" stroke-linecap="butt"/>
<text transform="translate(876.99,793.31) scale(1.0694,1)" x="0.05 5.83 11.62" font-size="10.21" fill="#000">600</text>
<line x1="904.06" y1="747.87" x2="911.00" y2="747.87" stroke="#000" stroke-width="1.6" stroke-linecap="butt"/>
<text transform="translate(876.99,752.42) scale(1.0656,1)" x="0.06 5.87 11.67" font-size="10.21" fill="#000">800</text>
<line x1="904.06" y1="706.99" x2="911.00" y2="706.99" stroke="#000" stroke-width="1.6" stroke-linecap="butt"/>
<text transform="translate(870.81,711.54) scale(1.0695,1)" x="-0.01 5.83 11.62 17.40" font-size="10.21" fill="#000">1000</text>
<line x1="911.00" y1="809.20" x2="911.00" y2="816.14" stroke="#000" stroke-width="1.6" stroke-linecap="butt"/>
<text transform="translate(908.15,831.89) scale(1.0041,1)" font-size="10.21" fill="#000">0</text>
<line x1="969.70" y1="809.20" x2="969.70" y2="816.14" stroke="#000" stroke-width="1.6" stroke-linecap="butt"/>
<text transform="translate(957.30,831.89) scale(1.0728,1)" x="-0.08 5.81 11.57 17.34" font-size="10.21" fill="#000">2000</text>
<line x1="1028.40" y1="809.20" x2="1028.40" y2="816.14" stroke="#000" stroke-width="1.6" stroke-linecap="butt"/>
<text transform="translate(1016.12,831.89) scale(1.0700,1)" x="0.05 5.83 11.61 17.39" font-size="10.21" fill="#000">4000</text>
<line x1="1087.10" y1="809.20" x2="1087.10" y2="816.14" stroke="#000" stroke-width="1.6" stroke-linecap="butt"/>
<text transform="translate(1074.71,831.89) scale(1.0746,1)" x="0.04 5.79 11.55 17.30" font-size="10.21" fill="#000">6000</text>
<line x1="1145.80" y1="809.20" x2="1145.80" y2="816.14" stroke="#000" stroke-width="1.6" stroke-linecap="butt"/>
<text transform="translate(1133.42,831.89) scale(1.0718,1)" x="0.04 5.81 11.58 17.35" font-size="10.21" fill="#000">8000</text>
<text transform="translate(1045.17,850.00) scale(0.9400,1)" font-size="10.94" fill="#000">Y</text>
<text transform="translate(855.90,750.10) rotate(-90) translate(-17.45,3.48) scale(1.0755,1)" x="-0.19 5.25 11.26 17.44 23.89 27.20" font-size="10.94" fill="#000">counts</text>
<text transform="translate(1198.00,749.30) rotate(90) translate(-19.49,2.83) scale(1.1068,1)" x="-0.27 5.10 11.44 14.83 17.92 20.40 26.41 29.45" font-size="10.94" fill="#000">cut in y</text>
</svg>
<script>
(function(){
var c=document.getElementById('img');var W=371,H=696;
var ctx=c.getContext('2d');var im=ctx.createImageData(W,H);var D=im.data;
var up=[996.1, 998.1, 998.1, 997.0, 997.4, 999.3, 997.9, 998.0], lo=[997.5, 997.5, 994.6, 997.7, 995.8, 998.7, 996.3, 997.0];
var s=123456789;function rnd(){s^=s<<13;s^=s>>>17;s^=s<<5;return ((s>>>0)%1000000)/1000000;}
function g(){var u=rnd()||1e-6,v=rnd();return Math.sqrt(-2*Math.log(u))*Math.cos(6.283185*v);}
var SIG=2.0, V0=989, V1=1005, half=348.2;
for(var y=0;y<H;y++){for(var x=0;x<W;x++){
 var b=Math.min(7,Math.floor(x/(W/8)));var m=(y<half?up[b]:lo[b]);
 var f=(m+g()*SIG-V0)/(V1-V0); if(f<0)f=0; if(f>1)f=1;
 var r=f<0.365079?0.0416+(1-0.0416)*f/0.365079:1;
 var gg=f<0.365079?0:(f<0.746032?(f-0.365079)/(0.746032-0.365079):1);
 var bb=f<0.746032?0:(f-0.746032)/(1-0.746032);
 var i=(y*W+x)*4;D[i]=r*255;D[i+1]=gg*255;D[i+2]=bb*255;D[i+3]=255;}}
ctx.putImageData(im,0,0);
})();
</script>
</body></html>
